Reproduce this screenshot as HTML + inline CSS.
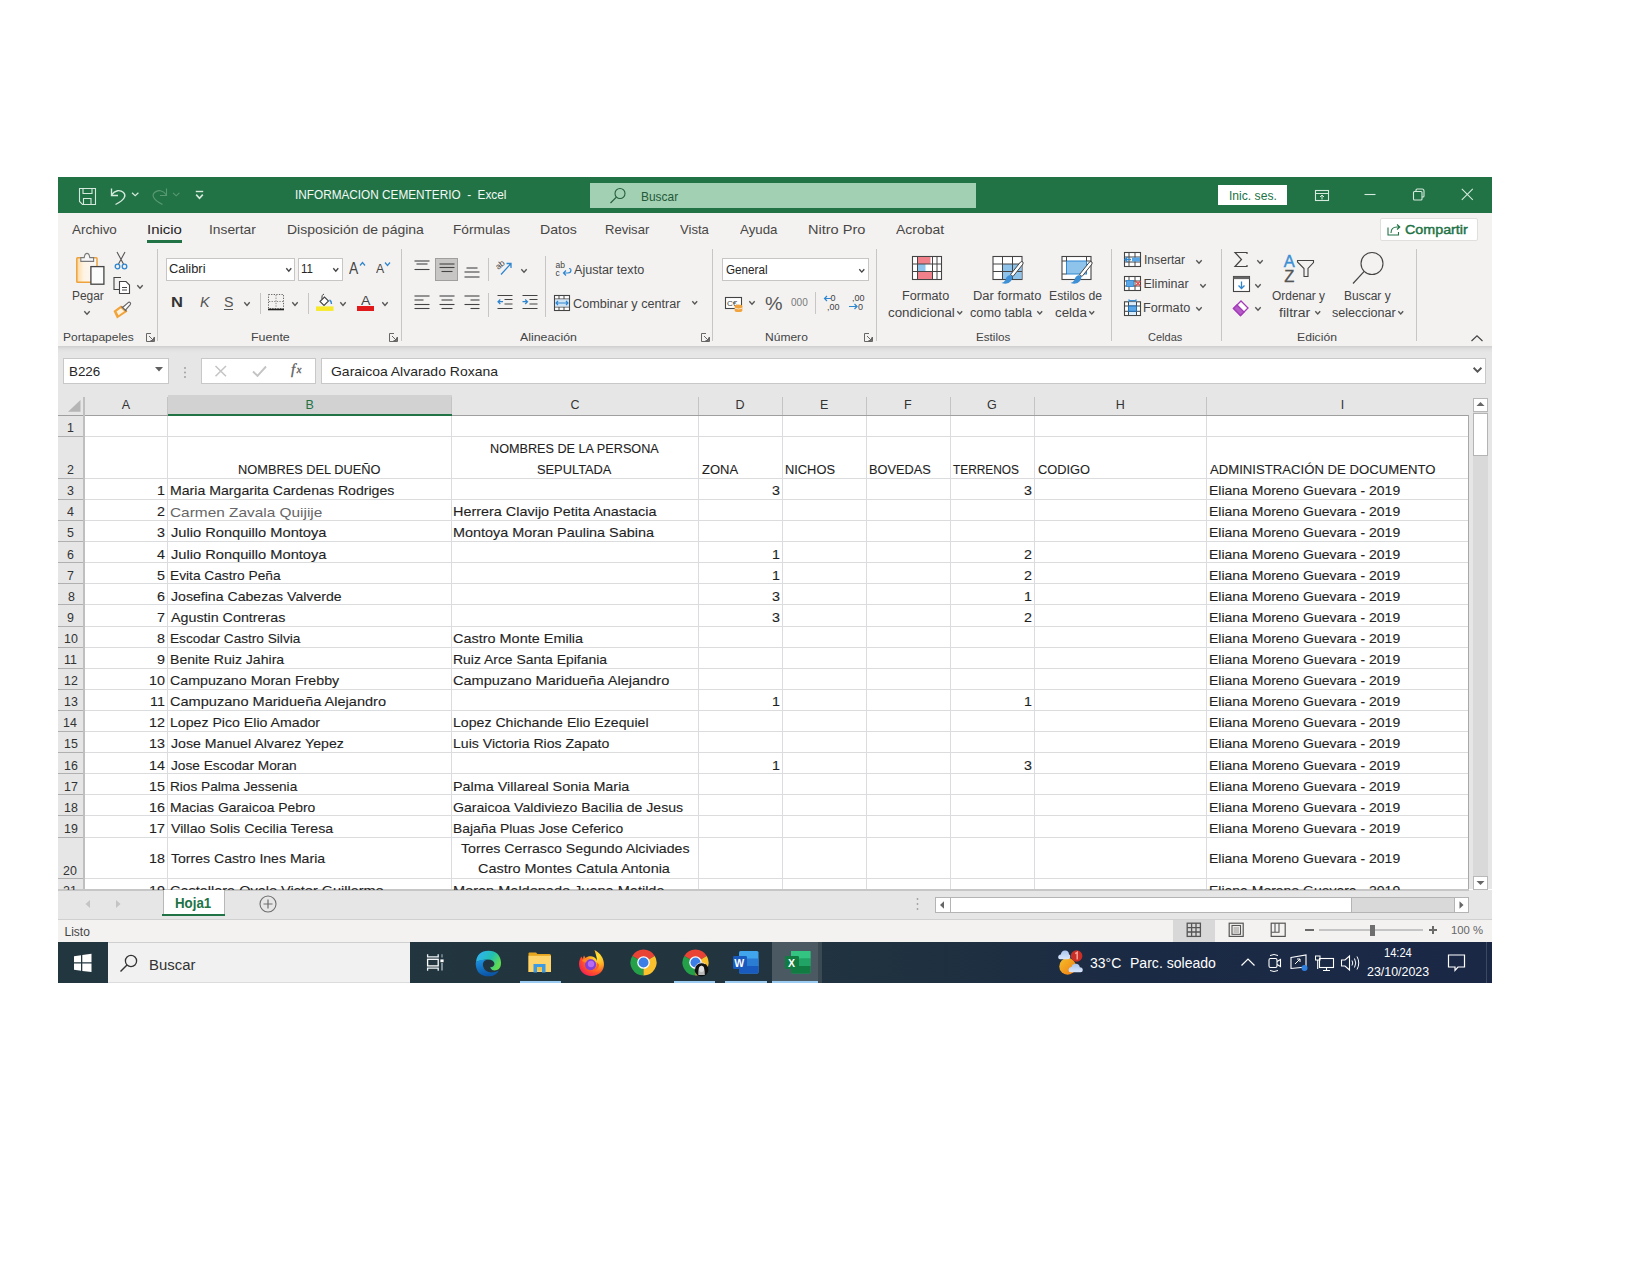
<!DOCTYPE html>
<html><head><meta charset="utf-8"><title>Excel</title>
<style>
html,body{margin:0;padding:0;background:#ffffff;}
body{width:1650px;height:1275px;position:relative;overflow:hidden;font-family:"Liberation Sans",sans-serif;}
svg{overflow:visible}
</style></head><body>
<div style="position:absolute;left:58px;top:177px;width:1434px;height:36px;background:#217346;"></div>
<div style="position:absolute;left:58px;top:213px;width:1434px;height:133px;background:#f3f2f1;"></div>
<div style="position:absolute;left:58px;top:346px;width:1434px;height:49px;background:linear-gradient(#cfcfcf 0px,#dadada 2px,#e2e2e2 4px,#e6e6e6 7px,#e6e6e6 100%);"></div>
<svg style="position:absolute;left:78px;top:187px;" width="20" height="20" viewBox="0 0 20 20"><path d="M1.5 1.5 H17.5 V17.5 H4.5 L1.5 14.5 Z" fill="none" stroke="#d5eadc" stroke-width="1.1"/>
<path d="M5 1.5 V6.5 H14 V1.5" fill="none" stroke="#d5eadc" stroke-width="1.1"/>
<path d="M5.5 17.5 V11.5 H13 V17.5" fill="none" stroke="#d5eadc" stroke-width="1.1"/></svg>
<svg style="position:absolute;left:109px;top:187px;" width="20" height="20" viewBox="0 0 20 20"><path d="M2.5 1.5 V8.5 H9" fill="none" stroke="#d5eadc" stroke-width="1.35"/>
<path d="M2.5 8 C6 3 11 2.5 14.5 5.5 C17.5 8.5 16 12.5 6.5 17.5" fill="none" stroke="#d5eadc" stroke-width="1.35"/></svg>
<svg style="position:absolute;left:131px;top:191px;" width="9" height="7" viewBox="0 0 9 7"><path d="M1 1.8 L4.2 4.8 L7.4 1.8" fill="none" stroke="#d5eadc" stroke-width="1.2"/></svg>
<svg style="position:absolute;left:151px;top:187px;" width="20" height="20" viewBox="0 0 20 20"><path d="M15.5 1.5 V8.5 H9" fill="none" stroke="#5a9a72" stroke-width="1.1"/>
<path d="M15.5 8 C12 3 7 2.5 3.5 5.5 C0.5 8.5 2 12.5 11.5 17.5" fill="none" stroke="#5a9a72" stroke-width="1.1"/></svg>
<svg style="position:absolute;left:172px;top:191px;" width="9" height="7" viewBox="0 0 9 7"><path d="M1 1.8 L4.2 4.8 L7.4 1.8" fill="none" stroke="#5a9a72" stroke-width="1.1"/></svg>
<svg style="position:absolute;left:194px;top:189px;" width="11" height="12" viewBox="0 0 11 12"><path d="M1.8 2.5 H9.2" stroke="#d5eadc" stroke-width="1.4"/>
<path d="M2.2 5.6 L5.5 9.2 L8.8 5.6" fill="none" stroke="#d5eadc" stroke-width="1.6"/></svg>
<div style="position:absolute;left:589.5px;top:183px;width:386.5px;height:25px;background:#a2d0b3;"></div>
<svg style="position:absolute;left:609px;top:187px;" width="18" height="18" viewBox="0 0 18 18"><circle cx="11" cy="6.5" r="5" fill="none" stroke="#245e3b" stroke-width="1.1"/>
<path d="M7.4 10.1 L1.5 16" stroke="#245e3b" stroke-width="1.2"/></svg>
<div style="position:absolute;left:1218px;top:185px;width:69px;height:20px;background:#ffffff;"></div>
<svg style="position:absolute;left:1313px;top:188px;" width="18" height="14" viewBox="0 0 18 14"><rect x="2.5" y="2.5" width="13" height="10" fill="none" stroke="#d5eadc" stroke-width="1.1"/>
<path d="M2.5 5.5 H15.5" stroke="#d5eadc" stroke-width="1"/><path d="M9 11.5 V7 M7 9 L9 7 L11 9" fill="none" stroke="#d5eadc" stroke-width="1"/></svg>
<svg style="position:absolute;left:1363px;top:190px;" width="14" height="8" viewBox="0 0 14 8"><path d="M1.5 4.5 H12.5" stroke="#d5eadc" stroke-width="1.1"/></svg>
<svg style="position:absolute;left:1411px;top:187px;" width="15" height="15" viewBox="0 0 15 15"><rect x="2.5" y="4.5" width="8.5" height="8.5" rx="1" fill="none" stroke="#d5eadc" stroke-width="1.1"/>
<path d="M5 4.5 V3 Q5 2 6 2 H11 Q13 2 13 4 V9 Q13 10 12 10 H11" fill="none" stroke="#d5eadc" stroke-width="1.1"/></svg>
<svg style="position:absolute;left:1460px;top:187px;" width="15" height="15" viewBox="0 0 15 15"><path d="M1.8 1.8 L12.8 12.8 M12.8 1.8 L1.8 12.8" stroke="#d5eadc" stroke-width="1.1"/></svg>
<div style="position:absolute;left:147.4px;top:240px;width:34.599999999999994px;height:2.5999999999999943px;background:#217346;"></div>
<div style="position:absolute;left:1379.5px;top:217.5px;width:98.5px;height:23.80000000000001px;background:#ffffff;box-sizing:border-box;border:1px solid #e1dfdd;border-radius:2px;"></div>
<svg style="position:absolute;left:1386px;top:222px;" width="15" height="15" viewBox="0 0 15 15"><path d="M2 5.5 V13 H12.5 V10" fill="none" stroke="#217346" stroke-width="1.1"/>
<path d="M5 11 C5 7 7.5 5 11 5 H13.5 M11 2.5 L13.8 5 L11 7.5" fill="none" stroke="#217346" stroke-width="1.1"/></svg>
<div style="position:absolute;left:62.6px;top:357.6px;width:106.6px;height:26.599999999999966px;background:#ffffff;box-sizing:border-box;border:1px solid #c8c8c8;"></div>
<svg style="position:absolute;left:154px;top:366px;" width="10" height="7" viewBox="0 0 10 7"><path d="M1 1 H9 L5 5.5 Z" fill="#5f5f5f"/></svg>
<svg style="position:absolute;left:183px;top:366px;" width="4" height="14" viewBox="0 0 4 14"><circle cx="2" cy="2" r="0.9" fill="#9a9a9a"/><circle cx="2" cy="6.5" r="0.9" fill="#9a9a9a"/><circle cx="2" cy="11" r="0.9" fill="#9a9a9a"/></svg>
<div style="position:absolute;left:201.4px;top:357.6px;width:114.9px;height:26.599999999999966px;background:#ffffff;box-sizing:border-box;border:1px solid #c8c8c8;"></div>
<svg style="position:absolute;left:213px;top:364px;" width="15" height="14" viewBox="0 0 15 14"><path d="M2.5 2 L13 12.2 M13 2 L2.5 12.2" stroke="#c4c4c4" stroke-width="1.5"/></svg>
<svg style="position:absolute;left:251px;top:364px;" width="17" height="14" viewBox="0 0 17 14"><path d="M2 7.5 L6.5 11.8 L15 2.5" fill="none" stroke="#c4c4c4" stroke-width="1.9"/></svg>
<svg style="position:absolute;left:290px;top:361px;" width="16" height="16" viewBox="0 0 16 16"><text x="1" y="12.5" font-family="Liberation Serif" font-style="italic" font-size="15" fill="#606060" stroke="#606060" stroke-width="0.3">f</text><text x="6.8" y="12" font-family="Liberation Serif" font-style="italic" font-size="10.5" fill="#606060" stroke="#606060" stroke-width="0.3">x</text></svg>
<div style="position:absolute;left:320.5px;top:357.6px;width:1165.5px;height:26.599999999999966px;background:#ffffff;box-sizing:border-box;border:1px solid #c8c8c8;"></div>
<svg style="position:absolute;left:1471.5px;top:366px;" width="11" height="8" viewBox="0 0 11 8"><path d="M1.6 1.8 L5.5 5.6 L9.4 1.8" fill="none" stroke="#555" stroke-width="1.9"/></svg>
<div style="position:absolute;left:58px;top:890px;width:1434px;height:29px;background:#e6e6e6;"></div>
<div style="position:absolute;left:58px;top:889px;width:1411px;height:1.5px;background:#c6c6c6;"></div>
<svg style="position:absolute;left:84px;top:899px;" width="8" height="10" viewBox="0 0 8 10"><path d="M6 1 L1.5 5 L6 9 Z" fill="#c4c4c4"/></svg>
<svg style="position:absolute;left:114px;top:899px;" width="8" height="10" viewBox="0 0 8 10"><path d="M2 1 L6.5 5 L2 9 Z" fill="#c4c4c4"/></svg>
<div style="position:absolute;left:162.5px;top:889.5px;width:62.0px;height:26.100000000000023px;background:#ffffff;box-sizing:border-box;border-left:1px solid #b8b8b8;border-right:1px solid #b8b8b8;"></div>
<div style="position:absolute;left:162px;top:913.5px;width:63px;height:2.1000000000000227px;background:#217346;"></div>
<svg style="position:absolute;left:258px;top:894px;" width="20" height="20" viewBox="0 0 20 20"><circle cx="10" cy="10" r="8" fill="none" stroke="#6e6e6e" stroke-width="1.1"/><path d="M10 5.5 V14.5 M5.5 10 H14.5" stroke="#6e6e6e" stroke-width="1.2"/></svg>
<svg style="position:absolute;left:915px;top:897px;" width="5" height="14" viewBox="0 0 5 14"><circle cx="2.5" cy="2" r="0.9" fill="#a0a0a0"/><circle cx="2.5" cy="7" r="0.9" fill="#a0a0a0"/><circle cx="2.5" cy="12" r="0.9" fill="#a0a0a0"/></svg>
<div style="position:absolute;left:934.5px;top:897px;width:534.5px;height:15.5px;background:#ffffff;box-sizing:border-box;border:1px solid #b4b4b4;"></div>
<div style="position:absolute;left:950px;top:898px;width:518px;height:13.5px;background:#d9d9d9;"></div>
<div style="position:absolute;left:950px;top:898px;width:402.20000000000005px;height:13.5px;background:#ffffff;box-sizing:border-box;border-right:1px solid #b4b4b4;border-left:1px solid #b4b4b4;"></div>
<div style="position:absolute;left:1453.9px;top:897px;width:15.099999999999909px;height:15.5px;background:#ffffff;box-sizing:border-box;border:1px solid #b4b4b4;"></div>
<svg style="position:absolute;left:937px;top:899.5px;" width="10" height="10" viewBox="0 0 10 10"><path d="M7 1.3 L3 5 L7 8.7 Z" fill="#666"/></svg>
<svg style="position:absolute;left:1456px;top:899.5px;" width="10" height="10" viewBox="0 0 10 10"><path d="M3.5 1.3 L7.5 5 L3.5 8.7 Z" fill="#666"/></svg>
<div style="position:absolute;left:58px;top:919px;width:1434px;height:23px;background:#f3f2f1;"></div>
<div style="position:absolute;left:58px;top:918.5px;width:1434px;height:1.0px;background:#d0d0d0;"></div>
<div style="position:absolute;left:1173px;top:919.5px;width:42px;height:22.5px;background:#d8d8d8;"></div>
<svg style="position:absolute;left:1186px;top:922px;" width="16" height="16" viewBox="0 0 16 16"><rect x="1.2" y="1.2" width="13.2" height="13.2" fill="none" stroke="#555" stroke-width="1.3"/>
<path d="M5.6 1.2 V14.4 M10 1.2 V14.4 M1.2 5.6 H14.4 M1.2 10 H14.4" stroke="#555" stroke-width="1.3"/></svg>
<svg style="position:absolute;left:1228px;top:922px;" width="17" height="16" viewBox="0 0 17 16"><rect x="1.2" y="1.2" width="14" height="13.2" fill="none" stroke="#555" stroke-width="1.2"/>
<rect x="4" y="3.5" width="8.5" height="8.8" fill="none" stroke="#555" stroke-width="1.1"/>
<path d="M5.5 6 H11 M5.5 8 H11 M5.5 10 H11" stroke="#777" stroke-width="0.8"/></svg>
<svg style="position:absolute;left:1270px;top:922px;" width="17" height="16" viewBox="0 0 17 16"><rect x="1.2" y="1.2" width="14" height="13.2" fill="none" stroke="#555" stroke-width="1.2"/>
<path d="M1.2 10.2 H9 V1.2 M5 1.2 V10" fill="none" stroke="#555" stroke-width="1.1"/></svg>
<div style="position:absolute;left:1305px;top:929.2px;width:8.5px;height:1.6999999999999318px;background:#6a6a6a;"></div>
<div style="position:absolute;left:1319.3px;top:929.3px;width:104.10000000000014px;height:1.7000000000000455px;background:#c4c4c4;"></div>
<div style="position:absolute;left:1369.7px;top:925px;width:5.2999999999999545px;height:11.399999999999977px;background:#6e6e6e;"></div>
<div style="position:absolute;left:1429.2px;top:929.2px;width:7.7999999999999545px;height:1.6999999999999318px;background:#6a6a6a;"></div>
<div style="position:absolute;left:1432.3px;top:926px;width:1.7000000000000455px;height:8.299999999999955px;background:#6a6a6a;"></div>
<div style="position:absolute;left:156.9px;top:249.4px;width:1.0px;height:92.1px;background:#c8c6c4;"></div>
<div style="position:absolute;left:400.5px;top:249.4px;width:1.0px;height:92.1px;background:#c8c6c4;"></div>
<div style="position:absolute;left:712.1px;top:249.4px;width:1.0px;height:92.1px;background:#c8c6c4;"></div>
<div style="position:absolute;left:876.0px;top:249.4px;width:1.0px;height:92.1px;background:#c8c6c4;"></div>
<div style="position:absolute;left:1110.9px;top:249.4px;width:1.0px;height:92.1px;background:#c8c6c4;"></div>
<div style="position:absolute;left:1220.5px;top:249.4px;width:1.0px;height:92.1px;background:#c8c6c4;"></div>
<div style="position:absolute;left:1415.9px;top:249.4px;width:1.0px;height:92.1px;background:#c8c6c4;"></div>
<svg style="position:absolute;left:74px;top:252px;" width="33" height="34" viewBox="0 0 33 34"><defs><linearGradient id="cbg" x1="0" y1="0" x2="1" y2="0"><stop offset="0" stop-color="#fcd9a0"/><stop offset="0.35" stop-color="#fff4e4"/><stop offset="1" stop-color="#f8f8f8"/></linearGradient></defs>
<rect x="2.8" y="5.8" width="20.2" height="24.4" rx="0.8" fill="url(#cbg)" stroke="#eda23c" stroke-width="1.5"/>
<path d="M6.8 9.4 V5.6 H10.2 Q10.8 1.4 13 1.4 Q15.2 1.4 15.8 5.6 H19.6 V9.4 Z" fill="#f7f7f7" stroke="#7a7a7a" stroke-width="1.1"/>
<rect x="16.9" y="14.6" width="13" height="17.6" fill="#fbfbfb" stroke="#444" stroke-width="1.3"/></svg>
<svg style="position:absolute;left:83px;top:309.6px;" width="8" height="5.4" viewBox="0 0 8 5.4"><path d="M1.3 1.3 L4.0 4.2 L6.7 1.3" fill="none" stroke="#555" stroke-width="1.35"/></svg>
<svg style="position:absolute;left:113px;top:251px;" width="16" height="20" viewBox="0 0 16 20"><path d="M4 1 L10.5 13 M12 1 L5.5 13" stroke="#555" stroke-width="1.1"/>
<circle cx="4.5" cy="15.5" r="2.3" fill="none" stroke="#2e86cf" stroke-width="1.3"/><circle cx="11.5" cy="15.5" r="2.3" fill="none" stroke="#2e86cf" stroke-width="1.3"/></svg>
<svg style="position:absolute;left:112px;top:276px;" width="19" height="19" viewBox="0 0 19 19"><path d="M9 1.5 H2 V13.5 H7" fill="none" stroke="#444" stroke-width="1.1"/>
<path d="M7.5 5.5 H14 L17.5 9 V17.5 H7.5 Z" fill="#fff" stroke="#444" stroke-width="1.1"/>
<path d="M10 11.5 H15 M10 14 H15" stroke="#444" stroke-width="1"/></svg>
<svg style="position:absolute;left:136px;top:283.6px;" width="8" height="5.4" viewBox="0 0 8 5.4"><path d="M1.3 1.3 L4.0 4.2 L6.7 1.3" fill="none" stroke="#555" stroke-width="1.35"/></svg>
<svg style="position:absolute;left:112px;top:301px;" width="20" height="19" viewBox="0 0 20 19"><path d="M1.5 10 L9 4.5 L15.5 10.5 L5 17.5 Z" fill="#f2a33a"/>
<path d="M4.5 10.5 L9 7.2 L12.2 10.3 L6.5 14.2 Z" fill="#fff3df"/>
<path d="M10.2 6.8 L16.2 1.6 Q17.3 0.8 18.2 1.7 Q19 2.6 18.2 3.6 L13.2 9.3" fill="#fdfdfd" stroke="#666" stroke-width="1.2"/>
<path d="M9.5 5.5 L14.5 10.2" stroke="#666" stroke-width="1.2"/></svg>
<svg style="position:absolute;left:145.5px;top:333.3px;" width="9" height="9" viewBox="0 0 9 9"><path d="M0.5 0.5 H5 M0.5 0.5 V8.5 H8.5 V4" fill="none" stroke="#666" stroke-width="1"/><path d="M3 3 L7.5 7.5 M7.5 4.5 V7.5 H4.5" fill="none" stroke="#666" stroke-width="1"/></svg>
<div style="position:absolute;left:166.4px;top:257.9px;width:128.9px;height:23.5px;background:#fff;box-sizing:border-box;border:1px solid #c8c6c4;"></div>
<svg style="position:absolute;left:284.8px;top:266.8px;" width="7.6" height="5.4" viewBox="0 0 7.6 5.4"><path d="M1.3 1.3 L3.8 4.2 L6.3 1.3" fill="none" stroke="#444" stroke-width="1.35"/></svg>
<div style="position:absolute;left:297.9px;top:257.9px;width:44.700000000000045px;height:23.5px;background:#fff;box-sizing:border-box;border:1px solid #c8c6c4;"></div>
<svg style="position:absolute;left:331.8px;top:266.8px;" width="7.6" height="5.4" viewBox="0 0 7.6 5.4"><path d="M1.3 1.3 L3.8 4.2 L6.3 1.3" fill="none" stroke="#444" stroke-width="1.35"/></svg>
<svg style="position:absolute;left:358.5px;top:260.5px;" width="8" height="6" viewBox="0 0 8 6"><path d="M1 4.5 L3.5 1.5 L6 4.5" fill="none" stroke="#2e86cf" stroke-width="1.2"/></svg>
<svg style="position:absolute;left:384px;top:260.5px;" width="8" height="6" viewBox="0 0 8 6"><path d="M1 1.5 L3.5 4.5 L6 1.5" fill="none" stroke="#2e86cf" stroke-width="1.2"/></svg>
<div style="position:absolute;left:224px;top:308.5px;width:9px;height:1.1000000000000227px;background:#555;"></div>
<svg style="position:absolute;left:242.5px;top:300.5px;" width="8" height="5.6" viewBox="0 0 8 5.6"><path d="M1.3 1.3 L4.0 4.3999999999999995 L6.7 1.3" fill="none" stroke="#555" stroke-width="1.35"/></svg>
<div style="position:absolute;left:259.8px;top:292.7px;width:1.0px;height:21.30000000000001px;background:#c8c6c4;"></div>
<svg style="position:absolute;left:267px;top:293px;" width="19" height="19" viewBox="0 0 19 19"><rect x="1.5" y="1.5" width="15" height="14" fill="none" stroke="#666" stroke-width="1" stroke-dasharray="1.3 1.3"/>
<path d="M9 2 V15 M2 8.5 H16" stroke="#888" stroke-width="1" stroke-dasharray="1.3 1.3"/>
<path d="M1 16.5 H17" stroke="#222" stroke-width="1.6"/></svg>
<svg style="position:absolute;left:291px;top:300.5px;" width="8" height="5.6" viewBox="0 0 8 5.6"><path d="M1.3 1.3 L4.0 4.3999999999999995 L6.7 1.3" fill="none" stroke="#555" stroke-width="1.35"/></svg>
<div style="position:absolute;left:308.0px;top:292.7px;width:1.0px;height:21.30000000000001px;background:#c8c6c4;"></div>
<svg style="position:absolute;left:316px;top:293px;" width="19" height="19" viewBox="0 0 19 19"><path d="M4 8.5 L8.5 4 L12.5 8 L8 12.5 Z" fill="#fff" stroke="#444" stroke-width="1.1"/>
<path d="M6 6 Q5.5 1.5 8 1.2" fill="none" stroke="#444" stroke-width="1"/>
<path d="M13.5 7 Q15.5 8 15.5 11" fill="none" stroke="#2e86cf" stroke-width="1.4"/>
<rect x="0" y="13.4" width="17.5" height="4.5" fill="#f7e92a"/></svg>
<svg style="position:absolute;left:339.2px;top:300.5px;" width="8" height="5.6" viewBox="0 0 8 5.6"><path d="M1.3 1.3 L4.0 4.3999999999999995 L6.7 1.3" fill="none" stroke="#555" stroke-width="1.35"/></svg>
<div style="position:absolute;left:357px;top:306.4px;width:17.399999999999977px;height:4.5px;background:#e01a1a;"></div>
<svg style="position:absolute;left:380.8px;top:300.5px;" width="8" height="5.6" viewBox="0 0 8 5.6"><path d="M1.3 1.3 L4.0 4.3999999999999995 L6.7 1.3" fill="none" stroke="#555" stroke-width="1.35"/></svg>
<svg style="position:absolute;left:388.8px;top:333px;" width="9" height="9" viewBox="0 0 9 9"><path d="M0.5 0.5 H5 M0.5 0.5 V8.5 H8.5 V4" fill="none" stroke="#666" stroke-width="1"/><path d="M3 3 L7.5 7.5 M7.5 4.5 V7.5 H4.5" fill="none" stroke="#666" stroke-width="1"/></svg>
<div style="position:absolute;left:435.3px;top:257.6px;width:22.5px;height:23.899999999999977px;background:#c8c6c4;box-sizing:border-box;border:1px solid #a19f9d;"></div>
<svg style="position:absolute;left:413.5px;top:260px;" width="18" height="18" viewBox="0 0 18 18"><path d="M0.5 1.0 H15.5" stroke="#444" stroke-width="1.1"/><path d="M2.5 4.0 H13.5" stroke="#444" stroke-width="1.1"/><path d="M0.5 9.5 H15.5" stroke="#444" stroke-width="1.1"/></svg>
<svg style="position:absolute;left:438.5px;top:263px;" width="18" height="18" viewBox="0 0 18 18"><path d="M0.5 1.0 H15.5" stroke="#444" stroke-width="1.1"/><path d="M0.5 4.5 H15.5" stroke="#444" stroke-width="1.1"/><path d="M2.5 8.5 H13.5" stroke="#444" stroke-width="1.1"/></svg>
<svg style="position:absolute;left:464px;top:266.5px;" width="18" height="18" viewBox="0 0 18 18"><path d="M2.5 1.0 H13.5" stroke="#444" stroke-width="1.1"/><path d="M0.5 5.0 H15.5" stroke="#444" stroke-width="1.1"/><path d="M0.5 10.0 H15.5" stroke="#444" stroke-width="1.1"/></svg>
<div style="position:absolute;left:487.5px;top:258px;width:1.0px;height:22.5px;background:#c8c6c4;"></div>
<svg style="position:absolute;left:495px;top:259px;" width="20" height="18" viewBox="0 0 20 18"><text x="1" y="9" font-family="Liberation Sans" font-size="8.5" fill="#444" transform="rotate(-40 5 7)">ab</text>
<path d="M6 15.5 L16 4.5 M11.5 4.5 H16 V9" fill="none" stroke="#2e86cf" stroke-width="1.3"/></svg>
<svg style="position:absolute;left:519.6px;top:267.5px;" width="8" height="5.4" viewBox="0 0 8 5.4"><path d="M1.3 1.3 L4.0 4.2 L6.7 1.3" fill="none" stroke="#555" stroke-width="1.35"/></svg>
<svg style="position:absolute;left:413.5px;top:295px;" width="18" height="18" viewBox="0 0 18 18"><path d="M0.5 1.0 H15.5" stroke="#444" stroke-width="1.1"/><path d="M0.5 5.0 H9.5" stroke="#444" stroke-width="1.1"/><path d="M0.5 9.5 H15.5" stroke="#444" stroke-width="1.1"/><path d="M0.5 13.5 H15.5" stroke="#444" stroke-width="1.1"/></svg>
<svg style="position:absolute;left:438.5px;top:295px;" width="18" height="18" viewBox="0 0 18 18"><path d="M0.5 1.0 H15.5" stroke="#444" stroke-width="1.1"/><path d="M2.5 5.0 H13.5" stroke="#444" stroke-width="1.1"/><path d="M0.5 9.5 H15.5" stroke="#444" stroke-width="1.1"/><path d="M2.5 13.5 H13.5" stroke="#444" stroke-width="1.1"/></svg>
<svg style="position:absolute;left:464px;top:295px;" width="18" height="18" viewBox="0 0 18 18"><path d="M0.5 1.0 H15.5" stroke="#444" stroke-width="1.1"/><path d="M6.5 5.0 H15.5" stroke="#444" stroke-width="1.1"/><path d="M0.5 9.5 H15.5" stroke="#444" stroke-width="1.1"/><path d="M6.5 13.5 H15.5" stroke="#444" stroke-width="1.1"/></svg>
<div style="position:absolute;left:487.5px;top:292.5px;width:1.0px;height:24.0px;background:#c8c6c4;"></div>
<svg style="position:absolute;left:496.5px;top:295px;" width="18" height="18" viewBox="0 0 18 18"><path d="M0.5 0.5 H15.5 M7.5 4.5 H15.5 M7.5 9 H15.5 M0.5 13.5 H15.5" stroke="#444" stroke-width="1.1"/>
<path d="M6 6.7 H1 M3.3 4.5 L1 6.7 L3.3 9" fill="none" stroke="#2e86cf" stroke-width="1.2"/></svg>
<svg style="position:absolute;left:521.5px;top:295px;" width="18" height="18" viewBox="0 0 18 18"><path d="M0.5 0.5 H15.5 M7.5 4.5 H15.5 M7.5 9 H15.5 M0.5 13.5 H15.5" stroke="#444" stroke-width="1.1"/>
<path d="M0.5 6.7 H5.5 M3.2 4.5 L5.5 6.7 L3.2 9" fill="none" stroke="#2e86cf" stroke-width="1.2"/></svg>
<div style="position:absolute;left:545.3px;top:255.7px;width:1.0px;height:61.10000000000002px;background:#c8c6c4;"></div>
<svg style="position:absolute;left:555px;top:261px;" width="18" height="17" viewBox="0 0 18 17"><text x="0.5" y="7" font-family="Liberation Sans" font-size="8.5" fill="#444">ab</text>
<text x="0.5" y="14.5" font-family="Liberation Sans" font-size="8.5" fill="#444">c</text>
<path d="M9 12 H13 Q16 12 16 9 Q16 7.5 14 7.5 M11 9.5 L8.5 12 L11 14.5" fill="none" stroke="#2e86cf" stroke-width="1.2"/></svg>
<svg style="position:absolute;left:553px;top:293.5px;" width="18" height="18" viewBox="0 0 18 18"><rect x="1.5" y="1.5" width="15" height="15" fill="#fff" stroke="#444" stroke-width="1.1"/>
<path d="M1.5 5 H16.5 M1.5 13 H16.5 M6 1.5 V5 M11 1.5 V5 M6 13 V16.5 M11 13 V16.5" stroke="#444" stroke-width="1"/>
<rect x="2" y="5.5" width="14" height="7" fill="#cfe4f7"/>
<path d="M3 9 H15 M5 7 L3 9 L5 11 M13 7 L15 9 L13 11" fill="none" stroke="#2e86cf" stroke-width="1.1"/></svg>
<svg style="position:absolute;left:691px;top:300.2px;" width="7.5" height="5.2" viewBox="0 0 7.5 5.2"><path d="M1.3 1.3 L3.75 4.0 L6.2 1.3" fill="none" stroke="#555" stroke-width="1.35"/></svg>
<svg style="position:absolute;left:700.6px;top:333px;" width="9" height="9" viewBox="0 0 9 9"><path d="M0.5 0.5 H5 M0.5 0.5 V8.5 H8.5 V4" fill="none" stroke="#666" stroke-width="1"/><path d="M3 3 L7.5 7.5 M7.5 4.5 V7.5 H4.5" fill="none" stroke="#666" stroke-width="1"/></svg>
<div style="position:absolute;left:722px;top:257.7px;width:146.60000000000002px;height:23.69999999999999px;background:#fff;box-sizing:border-box;border:1px solid #c8c6c4;"></div>
<svg style="position:absolute;left:858px;top:267.6px;" width="7.6" height="5.3" viewBox="0 0 7.6 5.3"><path d="M1.3 1.3 L3.8 4.1 L6.3 1.3" fill="none" stroke="#444" stroke-width="1.35"/></svg>
<svg style="position:absolute;left:724px;top:296px;" width="21" height="17" viewBox="0 0 21 17"><rect x="1.5" y="1.5" width="16" height="11" fill="#fff" stroke="#444" stroke-width="1.1"/>
<text x="3" y="10" font-family="Liberation Sans" font-size="8" fill="#444">C€</text>
<ellipse cx="14.5" cy="10" rx="3.8" ry="1.6" fill="#f0a33c"/><rect x="10.7" y="10" width="7.6" height="4.5" fill="#f0a33c"/>
<ellipse cx="14.5" cy="14.5" rx="3.8" ry="1.6" fill="#f0a33c"/><path d="M10.7 12.2 Q14.5 13.8 18.3 12.2" stroke="#fff" stroke-width="0.7" fill="none"/></svg>
<svg style="position:absolute;left:748px;top:300.4px;" width="8" height="5.4" viewBox="0 0 8 5.4"><path d="M1.3 1.3 L4.0 4.2 L6.7 1.3" fill="none" stroke="#555" stroke-width="1.35"/></svg>
<div style="position:absolute;left:814.8px;top:292px;width:1.0px;height:21.5px;background:#c8c6c4;"></div>
<svg style="position:absolute;left:822px;top:293px;" width="19" height="19" viewBox="0 0 19 19"><text x="8.5" y="8" font-family="Liberation Sans" font-size="9" fill="#444">0</text>
<text x="5" y="17" font-family="Liberation Sans" font-size="9" fill="#444">,00</text>
<path d="M9 5.5 H2.5 M5 3 L2.5 5.5 L5 8" fill="none" stroke="#2e86cf" stroke-width="1.2"/></svg>
<svg style="position:absolute;left:847px;top:293px;" width="20" height="19" viewBox="0 0 20 19"><text x="5" y="8" font-family="Liberation Sans" font-size="9" fill="#444">,00</text>
<text x="11" y="17" font-family="Liberation Sans" font-size="9" fill="#444">0</text>
<path d="M2 13.5 H10 M7.5 11 L10 13.5 L7.5 16" fill="none" stroke="#2e86cf" stroke-width="1.2"/></svg>
<svg style="position:absolute;left:864.4px;top:333px;" width="9" height="9" viewBox="0 0 9 9"><path d="M0.5 0.5 H5 M0.5 0.5 V8.5 H8.5 V4" fill="none" stroke="#666" stroke-width="1"/><path d="M3 3 L7.5 7.5 M7.5 4.5 V7.5 H4.5" fill="none" stroke="#666" stroke-width="1"/></svg>
<svg style="position:absolute;left:911px;top:255px;" width="32" height="26" viewBox="0 0 32 26"><rect x="1.5" y="1.5" width="29" height="23" fill="#fff" stroke="#444" stroke-width="1.1"/>
<rect x="6.5" y="2" width="13" height="7" fill="#f0808a"/><rect x="6.5" y="16" width="15" height="8" fill="#f0808a"/>
<rect x="6.5" y="9" width="8" height="7" fill="#8ec3ec"/>
<path d="M1.5 9 H30.5 M1.5 16.5 H30.5 M6.5 1.5 V24.5 M21.5 1.5 V24.5 M26 1.5 V24.5" stroke="#444" stroke-width="1"/></svg>
<svg style="position:absolute;left:955.5px;top:310px;" width="7.5" height="5.2" viewBox="0 0 7.5 5.2"><path d="M1.3 1.3 L3.75 4.0 L6.2 1.3" fill="none" stroke="#555" stroke-width="1.35"/></svg>
<svg style="position:absolute;left:991px;top:255px;" width="36" height="32" viewBox="0 0 36 32"><rect x="2" y="1.5" width="29" height="23" fill="#fff" stroke="#444" stroke-width="1.1"/>
<rect x="11.5" y="9" width="19" height="15" fill="#8ec3ec"/>
<path d="M2 9 H31 M2 16.5 H31 M11.5 1.5 V24.5 M21.5 1.5 V24.5" stroke="#444" stroke-width="1"/>
<path d="M32 9 L22 21.5 L19.5 19.5 L29.5 7 Q31 6 32 7 Z" fill="#fff" stroke="#444" stroke-width="1"/>
<path d="M19 20 Q15 21 14.5 25 Q13 27.5 10.5 28 Q17 30 20 26 Q21.5 23.5 21.5 21.5 Z" fill="#3d8fd6"/></svg>
<svg style="position:absolute;left:1035.5px;top:310px;" width="7.5" height="5.2" viewBox="0 0 7.5 5.2"><path d="M1.3 1.3 L3.75 4.0 L6.2 1.3" fill="none" stroke="#555" stroke-width="1.35"/></svg>
<svg style="position:absolute;left:1060px;top:255px;" width="36" height="32" viewBox="0 0 36 32"><rect x="2" y="1.5" width="29" height="23" fill="#fff" stroke="#444" stroke-width="1.1"/>
<rect x="6.5" y="6" width="20" height="13" fill="#8ec3ec" stroke="#2e86cf" stroke-width="1"/>
<path d="M2 6 H6.5 M26.5 6 H31 M2 19 H6.5 M6.5 1.5 V6 M26.5 1.5 V6" stroke="#444" stroke-width="1"/>
<path d="M32 9 L22 21.5 L19.5 19.5 L29.5 7 Q31 6 32 7 Z" fill="#fff" stroke="#444" stroke-width="1"/>
<path d="M19 20 Q15 21 14.5 25 Q13 27.5 10.5 28 Q17 30 20 26 Q21.5 23.5 21.5 21.5 Z" fill="#3d8fd6"/></svg>
<svg style="position:absolute;left:1087.5px;top:310px;" width="7.5" height="5.2" viewBox="0 0 7.5 5.2"><path d="M1.3 1.3 L3.75 4.0 L6.2 1.3" fill="none" stroke="#555" stroke-width="1.35"/></svg>
<svg style="position:absolute;left:1123px;top:251px;" width="20" height="18" viewBox="0 0 20 18"><rect x="1.5" y="1.5" width="16" height="14" fill="#fff" stroke="#444" stroke-width="1.1"/>
<path d="M1.5 6 H17.5 M1.5 11 H17.5 M6 1.5 V15.5 M12 1.5 V15.5" stroke="#444" stroke-width="1"/>
<rect x="9" y="6.5" width="8" height="4" fill="#5aa5e6"/>
<path d="M8 8.5 H2 M4.5 6 L2 8.5 L4.5 11" fill="none" stroke="#2e86cf" stroke-width="1.3"/></svg>
<svg style="position:absolute;left:1195px;top:258.5px;" width="8" height="5.5" viewBox="0 0 8 5.5"><path d="M1.3 1.3 L4.0 4.3 L6.7 1.3" fill="none" stroke="#555" stroke-width="1.35"/></svg>
<svg style="position:absolute;left:1123px;top:275px;" width="20" height="18" viewBox="0 0 20 18"><rect x="1.5" y="1.5" width="16" height="14" fill="#fff" stroke="#444" stroke-width="1.1"/>
<path d="M1.5 6 H17.5 M1.5 11 H17.5 M6 1.5 V15.5 M12 1.5 V15.5" stroke="#444" stroke-width="1"/>
<rect x="3.5" y="5.5" width="7" height="6" fill="#5aa5e6" stroke="#2e86cf" stroke-width="0.8"/>
<path d="M12.5 6 L17.5 11 M17.5 6 L12.5 11" stroke="#e04848" stroke-width="1.2"/></svg>
<svg style="position:absolute;left:1198.7px;top:282.5px;" width="8" height="5.5" viewBox="0 0 8 5.5"><path d="M1.3 1.3 L4.0 4.3 L6.7 1.3" fill="none" stroke="#555" stroke-width="1.35"/></svg>
<svg style="position:absolute;left:1123px;top:298px;" width="20" height="20" viewBox="0 0 20 20"><rect x="1.5" y="3.8" width="16" height="13.7" fill="#fff" stroke="#444" stroke-width="1.1"/>
<rect x="5.5" y="4.3" width="8" height="12.7" fill="#d9ecfb"/>
<path d="M1.5 8 H17.5 M1.5 13.3 H17.5 M5.5 3.8 V17.5 M13.5 3.8 V17.5" stroke="#444" stroke-width="1"/>
<rect x="5.5" y="8" width="8" height="5.3" fill="#5aa5e6" stroke="#1f6fb8" stroke-width="1"/>
<path d="M6 2.6 H13 M6 1.2 V4 M13 1.2 V4" stroke="#3b8fd4" stroke-width="1.1"/></svg>
<svg style="position:absolute;left:1194.5px;top:306.4px;" width="8" height="5.5" viewBox="0 0 8 5.5"><path d="M1.3 1.3 L4.0 4.3 L6.7 1.3" fill="none" stroke="#555" stroke-width="1.35"/></svg>
<svg style="position:absolute;left:1233px;top:251px;" width="17" height="18" viewBox="0 0 17 18"><path d="M14 3 V1.5 H2 L8.5 8.5 L2 15.5 H14 V14" fill="none" stroke="#444" stroke-width="1.2"/></svg>
<svg style="position:absolute;left:1256px;top:258.5px;" width="8" height="5.5" viewBox="0 0 8 5.5"><path d="M1.3 1.3 L4.0 4.3 L6.7 1.3" fill="none" stroke="#555" stroke-width="1.35"/></svg>
<svg style="position:absolute;left:1232px;top:275px;" width="20" height="18" viewBox="0 0 20 18"><rect x="1.5" y="1.5" width="16" height="15" fill="#fff" stroke="#444" stroke-width="1.1"/>
<rect x="1.5" y="1.5" width="16" height="2.6" fill="#666"/>
<path d="M9.5 6.5 V13.5 M6.5 10.5 L9.5 13.5 L12.5 10.5" fill="none" stroke="#2e86cf" stroke-width="1.3"/></svg>
<svg style="position:absolute;left:1254px;top:282.5px;" width="8" height="5.5" viewBox="0 0 8 5.5"><path d="M1.3 1.3 L4.0 4.3 L6.7 1.3" fill="none" stroke="#555" stroke-width="1.35"/></svg>
<svg style="position:absolute;left:1232px;top:299px;" width="18" height="18" viewBox="0 0 18 18"><path d="M1.5 9.5 L9 2 L16 9 L8.5 16.5 Z" fill="#fff" stroke="#a339b9" stroke-width="1.3"/>
<path d="M1.5 9.5 L5 6 L12 13 L8.5 16.5 Z" fill="#b55ac7" stroke="#a339b9" stroke-width="1.3"/></svg>
<svg style="position:absolute;left:1254px;top:306.4px;" width="8" height="5.5" viewBox="0 0 8 5.5"><path d="M1.3 1.3 L4.0 4.3 L6.7 1.3" fill="none" stroke="#555" stroke-width="1.35"/></svg>
<svg style="position:absolute;left:1282px;top:253px;" width="36" height="32" viewBox="0 0 36 32"><text x="1.8" y="13.5" font-family="Liberation Sans" font-size="16.5" fill="#3b8fd4" stroke="#3b8fd4" stroke-width="0.4">A</text>
<text x="2.3" y="28.6" font-family="Liberation Sans" font-size="16.5" fill="#555" stroke="#555" stroke-width="0.3">Z</text>
<path d="M15.5 7.5 H31.5 V9.5 L26 15.5 V23.5 H22 V15.5 L15.5 9 Z" fill="none" stroke="#444" stroke-width="1.1"/></svg>
<svg style="position:absolute;left:1313.5px;top:310px;" width="7.5" height="5.2" viewBox="0 0 7.5 5.2"><path d="M1.3 1.3 L3.75 4.0 L6.2 1.3" fill="none" stroke="#555" stroke-width="1.35"/></svg>
<svg style="position:absolute;left:1351px;top:251px;" width="35" height="35" viewBox="0 0 35 35"><circle cx="21" cy="12.5" r="11" fill="none" stroke="#444" stroke-width="1.1"/>
<path d="M13.2 20.3 L2 32.5" stroke="#444" stroke-width="1.2"/></svg>
<svg style="position:absolute;left:1396.5px;top:310px;" width="7.5" height="5.2" viewBox="0 0 7.5 5.2"><path d="M1.3 1.3 L3.75 4.0 L6.2 1.3" fill="none" stroke="#555" stroke-width="1.35"/></svg>
<svg style="position:absolute;left:1470px;top:334px;" width="14" height="9" viewBox="0 0 14 9"><path d="M1.5 7 L7 1.8 L12.5 7" fill="none" stroke="#444" stroke-width="1.2"/></svg>
<div style="position:absolute;left:58px;top:395.2px;width:1434px;height:494.3px;background:#e6e6e6;"></div>
<div style="position:absolute;left:84.5px;top:415.3px;width:1384.1px;height:474.2px;background:#ffffff;"></div>
<div style="position:absolute;left:167.7px;top:395.2px;width:283.90000000000003px;height:20.100000000000023px;background:#d2d2d2;"></div>
<svg style="position:absolute;left:66px;top:399px;" width="16" height="14" viewBox="0 0 16 14"><path d="M14.5 1 V12.8 H2 Z" fill="#b5b5b5"/></svg>
<div style="position:absolute;left:84.5px;top:435.9px;width:1384.1px;height:1.0px;background:#dadcdd;"></div>
<div style="position:absolute;left:84.5px;top:477.8px;width:1384.1px;height:1.0px;background:#dadcdd;"></div>
<div style="position:absolute;left:84.5px;top:498.90000000000003px;width:1384.1px;height:1.0px;background:#dadcdd;"></div>
<div style="position:absolute;left:84.5px;top:520.0px;width:1384.1px;height:1.0px;background:#dadcdd;"></div>
<div style="position:absolute;left:84.5px;top:541.1px;width:1384.1px;height:1.0px;background:#dadcdd;"></div>
<div style="position:absolute;left:84.5px;top:562.2px;width:1384.1px;height:1.0px;background:#dadcdd;"></div>
<div style="position:absolute;left:84.5px;top:583.3px;width:1384.1px;height:1.0px;background:#dadcdd;"></div>
<div style="position:absolute;left:84.5px;top:604.4px;width:1384.1px;height:1.0px;background:#dadcdd;"></div>
<div style="position:absolute;left:84.5px;top:625.5px;width:1384.1px;height:1.0px;background:#dadcdd;"></div>
<div style="position:absolute;left:84.5px;top:646.6px;width:1384.1px;height:1.0px;background:#dadcdd;"></div>
<div style="position:absolute;left:84.5px;top:667.7px;width:1384.1px;height:1.0px;background:#dadcdd;"></div>
<div style="position:absolute;left:84.5px;top:688.8px;width:1384.1px;height:1.0px;background:#dadcdd;"></div>
<div style="position:absolute;left:84.5px;top:709.9000000000001px;width:1384.1px;height:1.0px;background:#dadcdd;"></div>
<div style="position:absolute;left:84.5px;top:731.0px;width:1384.1px;height:1.0px;background:#dadcdd;"></div>
<div style="position:absolute;left:84.5px;top:752.1px;width:1384.1px;height:1.0px;background:#dadcdd;"></div>
<div style="position:absolute;left:84.5px;top:773.2px;width:1384.1px;height:1.0px;background:#dadcdd;"></div>
<div style="position:absolute;left:84.5px;top:794.3px;width:1384.1px;height:1.0px;background:#dadcdd;"></div>
<div style="position:absolute;left:84.5px;top:815.4000000000001px;width:1384.1px;height:1.0px;background:#dadcdd;"></div>
<div style="position:absolute;left:84.5px;top:836.5px;width:1384.1px;height:1.0px;background:#dadcdd;"></div>
<div style="position:absolute;left:84.5px;top:878.4px;width:1384.1px;height:1.0px;background:#dadcdd;"></div>
<div style="position:absolute;left:167.2px;top:415.3px;width:1.0px;height:474.2px;background:#dadcdd;"></div>
<div style="position:absolute;left:451.1px;top:415.3px;width:1.0px;height:474.2px;background:#dadcdd;"></div>
<div style="position:absolute;left:697.9px;top:415.3px;width:1.0px;height:474.2px;background:#dadcdd;"></div>
<div style="position:absolute;left:781.8px;top:415.3px;width:1.0px;height:474.2px;background:#dadcdd;"></div>
<div style="position:absolute;left:865.8px;top:415.3px;width:1.0px;height:474.2px;background:#dadcdd;"></div>
<div style="position:absolute;left:949.6px;top:415.3px;width:1.0px;height:474.2px;background:#dadcdd;"></div>
<div style="position:absolute;left:1033.8px;top:415.3px;width:1.0px;height:474.2px;background:#dadcdd;"></div>
<div style="position:absolute;left:1206.0px;top:415.3px;width:1.0px;height:474.2px;background:#dadcdd;"></div>
<div style="position:absolute;left:58px;top:435.9px;width:25.5px;height:1.0px;background:#b0b0b0;"></div>
<div style="position:absolute;left:58px;top:477.8px;width:25.5px;height:1.0px;background:#b0b0b0;"></div>
<div style="position:absolute;left:58px;top:498.90000000000003px;width:25.5px;height:1.0px;background:#b0b0b0;"></div>
<div style="position:absolute;left:58px;top:520.0px;width:25.5px;height:1.0px;background:#b0b0b0;"></div>
<div style="position:absolute;left:58px;top:541.1px;width:25.5px;height:1.0px;background:#b0b0b0;"></div>
<div style="position:absolute;left:58px;top:562.2px;width:25.5px;height:1.0px;background:#b0b0b0;"></div>
<div style="position:absolute;left:58px;top:583.3px;width:25.5px;height:1.0px;background:#b0b0b0;"></div>
<div style="position:absolute;left:58px;top:604.4px;width:25.5px;height:1.0px;background:#b0b0b0;"></div>
<div style="position:absolute;left:58px;top:625.5px;width:25.5px;height:1.0px;background:#b0b0b0;"></div>
<div style="position:absolute;left:58px;top:646.6px;width:25.5px;height:1.0px;background:#b0b0b0;"></div>
<div style="position:absolute;left:58px;top:667.7px;width:25.5px;height:1.0px;background:#b0b0b0;"></div>
<div style="position:absolute;left:58px;top:688.8px;width:25.5px;height:1.0px;background:#b0b0b0;"></div>
<div style="position:absolute;left:58px;top:709.9000000000001px;width:25.5px;height:1.0px;background:#b0b0b0;"></div>
<div style="position:absolute;left:58px;top:731.0px;width:25.5px;height:1.0px;background:#b0b0b0;"></div>
<div style="position:absolute;left:58px;top:752.1px;width:25.5px;height:1.0px;background:#b0b0b0;"></div>
<div style="position:absolute;left:58px;top:773.2px;width:25.5px;height:1.0px;background:#b0b0b0;"></div>
<div style="position:absolute;left:58px;top:794.3px;width:25.5px;height:1.0px;background:#b0b0b0;"></div>
<div style="position:absolute;left:58px;top:815.4000000000001px;width:25.5px;height:1.0px;background:#b0b0b0;"></div>
<div style="position:absolute;left:58px;top:836.5px;width:25.5px;height:1.0px;background:#b0b0b0;"></div>
<div style="position:absolute;left:58px;top:878.4px;width:25.5px;height:1.0px;background:#b0b0b0;"></div>
<div style="position:absolute;left:167.2px;top:397.2px;width:1.0px;height:18.100000000000023px;background:#c4c4c4;"></div>
<div style="position:absolute;left:451.1px;top:397.2px;width:1.0px;height:18.100000000000023px;background:#c4c4c4;"></div>
<div style="position:absolute;left:697.9px;top:397.2px;width:1.0px;height:18.100000000000023px;background:#c4c4c4;"></div>
<div style="position:absolute;left:781.8px;top:397.2px;width:1.0px;height:18.100000000000023px;background:#c4c4c4;"></div>
<div style="position:absolute;left:865.8px;top:397.2px;width:1.0px;height:18.100000000000023px;background:#c4c4c4;"></div>
<div style="position:absolute;left:949.6px;top:397.2px;width:1.0px;height:18.100000000000023px;background:#c4c4c4;"></div>
<div style="position:absolute;left:1033.8px;top:397.2px;width:1.0px;height:18.100000000000023px;background:#c4c4c4;"></div>
<div style="position:absolute;left:1206.0px;top:397.2px;width:1.0px;height:18.100000000000023px;background:#c4c4c4;"></div>
<div style="position:absolute;left:58px;top:414.7px;width:1410.6px;height:1.2000000000000455px;background:#9f9f9f;"></div>
<div style="position:absolute;left:167.7px;top:413.90000000000003px;width:283.90000000000003px;height:2.0px;background:#217346;"></div>
<div style="position:absolute;left:83px;top:397.2px;width:2px;height:492.3px;background:#bfbfbf;"></div>
<div style="position:absolute;left:1468.1px;top:415.3px;width:1.2000000000000455px;height:474.2px;background:#a8a8a8;"></div>
<div style="position:absolute;left:1469px;top:395.2px;width:23px;height:494.3px;background:#e6e6e6;"></div>
<div style="position:absolute;left:1472.5px;top:412px;width:15.299999999999955px;height:463.5px;background:#d9d9d9;"></div>
<div style="position:absolute;left:1472.5px;top:397.5px;width:15.299999999999955px;height:14.699999999999989px;background:#fff;box-sizing:border-box;border:1px solid #b8b8b8;"></div>
<svg style="position:absolute;left:1475px;top:400px;" width="11" height="8" viewBox="0 0 11 8"><path d="M1.5 6 L5.5 2 L9.5 6 Z" fill="#666"/></svg>
<div style="position:absolute;left:1472.5px;top:413.3px;width:15.299999999999955px;height:42.30000000000001px;background:#fff;box-sizing:border-box;border:1px solid #b4b4b4;"></div>
<div style="position:absolute;left:1472.5px;top:875.5px;width:15.299999999999955px;height:14.5px;background:#fff;box-sizing:border-box;border:1px solid #b8b8b8;"></div>
<svg style="position:absolute;left:1475px;top:879px;" width="11" height="8" viewBox="0 0 11 8"><path d="M1.5 2 L5.5 6 L9.5 2 Z" fill="#666"/></svg>
<div style="position:absolute;left:58px;top:942.3px;width:1434px;height:40.90000000000009px;background:linear-gradient(90deg,#22363f 0%,#22353f 45%,#1f3140 60%,#1b2a44 75%,#1a2846 100%);"></div>
<svg style="position:absolute;left:73px;top:953px;" width="20" height="20" viewBox="0 0 20 20"><path d="M1 3.2 L8 2.2 V9.3 H1 Z M9.3 2 L18.5 0.8 V9.3 H9.3 Z M1 10.6 H8 V17.7 L1 16.7 Z M9.3 10.6 H18.5 V19 L9.3 17.9 Z" fill="#ffffff"/></svg>
<div style="position:absolute;left:108px;top:942.3px;width:302.2px;height:40.90000000000009px;background:#f1f1f1;box-sizing:border-box;border-top:1px solid #cfcfcf;border-bottom:1px solid #dcdcdc;"></div>
<svg style="position:absolute;left:119px;top:954px;" width="20" height="19" viewBox="0 0 20 19"><circle cx="12" cy="7" r="5.6" fill="none" stroke="#333" stroke-width="1.3"/>
<path d="M8 11 L1.5 17.5" stroke="#333" stroke-width="1.5"/></svg>
<svg style="position:absolute;left:425px;top:953px;" width="21" height="19" viewBox="0 0 21 19"><path d="M2.6 1.2 V3.9 H13.2 V1.2 M2.6 17.8 V15.1 H13.2 V17.8" fill="none" stroke="#eef3f5" stroke-width="1.3"/>
<rect x="2.6" y="6.3" width="10.6" height="6.6" fill="none" stroke="#ffffff" stroke-width="1.3"/>
<path d="M17 1.2 V4.6" stroke="#8ea1aa" stroke-width="1.3"/><rect x="15.4" y="6.4" width="3.2" height="2.8" fill="#fff"/>
<path d="M17 10 V17.6" stroke="#b4c2c8" stroke-width="1.3"/></svg>
<svg style="position:absolute;left:475px;top:949.5px;" width="27" height="27" viewBox="0 0 27 27"><defs><linearGradient id="eg1" x1="0.1" y1="0.2" x2="0.95" y2="0.6"><stop offset="0" stop-color="#2fb4ee"/><stop offset="0.55" stop-color="#22bfb0"/><stop offset="1" stop-color="#5fdc52"/></linearGradient>
<linearGradient id="eg2" x1="0" y1="0" x2="0.3" y2="1"><stop offset="0" stop-color="#1d93e0"/><stop offset="1" stop-color="#0b56a8"/></linearGradient></defs>
<path d="M1 12 Q2 1 13.5 0.8 Q25 1 26 12.5 Q26.3 18.5 22 20 Q17 21.5 15 17.5 Q19 17 19.5 14 Q19 9.5 13 9.5 Q5 10 1 12 Z" fill="url(#eg1)"/>
<path d="M1 12 Q5 9 12 9.8 Q7 11 8 16 Q9.5 22 16.5 22.5 Q20.5 22.5 24 20.5 Q21 25.5 15 26.3 Q1.5 27 0.7 14 Z" fill="url(#eg2)"/>
<path d="M12.5 10.6 Q16.5 10.3 17.8 13 Q15.5 12.3 13.6 13.1 Q12 13.9 12.2 15.8 Q10 14.8 10.3 12.8 Q10.8 11.1 12.5 10.6 Z" fill="#1f3440" opacity="0.9"/></svg>
<svg style="position:absolute;left:527px;top:951px;" width="26" height="23" viewBox="0 0 26 23"><path d="M1.5 2.5 Q1.5 1.5 2.5 1.5 H9 L10.5 3 H22.5 Q24 3 24 4.5 V21 H1.5 Z" fill="#e5a51f"/>
<path d="M1.5 4.8 H24 V21 H1.5 Z" fill="#fdd46b"/>
<path d="M6.5 21.5 V13 H18.5 V21.5 H15 V16.2 H10 V21.5 Z" fill="#3d9ae3"/>
<rect x="10" y="16.2" width="5" height="3.5" fill="#f5c443"/></svg>
<div style="position:absolute;left:519.5px;top:981.2px;width:41.299999999999955px;height:2.0px;background:#9ccbf1;"></div>
<svg style="position:absolute;left:578px;top:949px;" width="27" height="28" viewBox="0 0 27 28"><defs><radialGradient id="ff1" cx="0.75" cy="0.25" r="0.9"><stop offset="0" stop-color="#ffe83a"/><stop offset="0.35" stop-color="#ffb324"/><stop offset="0.7" stop-color="#ff4f2b"/><stop offset="1" stop-color="#f01c5a"/></radialGradient></defs>
<path d="M13.5 27 C6 27 1 21.5 1 15 C1 12 2 9.5 3.5 7.5 L4.5 10 L6 6.5 L7.5 9 C9 7.5 11 7 13 7.2 C16 7.5 18.5 9.5 19 12 C19 8 17.5 5 16.5 1 C22.5 4 26 9.5 26 15.5 C26 22 20.5 27 13.5 27 Z" fill="url(#ff1)"/>
<circle cx="12.6" cy="15.6" r="5.6" fill="#8440d8"/><circle cx="13" cy="15" r="3.2" fill="#b76cf2"/>
<path d="M4 12 C6 9 9.5 8.5 12 9.5 C10 10.5 8.5 11.5 8 13.5 Z" fill="#ff8a20"/>
<path d="M18.5 13 C19.5 18 16.5 21.5 12.5 21.5 C16 23 21 20.5 21 15.5 Z" fill="#ff5a2a" opacity="0.9"/></svg>
<svg style="position:absolute;left:629.5px;top:949.3px;" width="27" height="27" viewBox="0 0 27 27"><path d="M13.5 13.5 L24.76 7 A13 13 0 0 0 2.24 7 Z" fill="#e94335"/>
<path d="M13.5 13.5 L2.24 7 A13 13 0 0 0 13.5 26.5 Z" fill="#24a148"/>
<path d="M13.5 13.5 L13.5 26.5 A13 13 0 0 0 24.76 7 Z" fill="#fbc02d"/>
<circle cx="13.5" cy="13.5" r="6.3" fill="#ffffff"/><circle cx="13.5" cy="13.5" r="5" fill="#3b7ee6"/></svg>
<svg style="position:absolute;left:681.5px;top:949.3px;" width="27" height="27" viewBox="0 0 27 27"><path d="M13.5 13.5 L24.76 7 A13 13 0 0 0 2.24 7 Z" fill="#e94335"/>
<path d="M13.5 13.5 L2.24 7 A13 13 0 0 0 13.5 26.5 Z" fill="#24a148"/>
<path d="M13.5 13.5 L13.5 26.5 A13 13 0 0 0 24.76 7 Z" fill="#fbc02d"/>
<circle cx="13.5" cy="13.5" r="6.3" fill="#ffffff"/><circle cx="13.5" cy="13.5" r="5" fill="#3b7ee6"/></svg>
<svg style="position:absolute;left:694px;top:962px;" width="16" height="16" viewBox="0 0 16 16"><circle cx="7.5" cy="7.7" r="6.9" fill="#111" stroke="#f0f0f0" stroke-width="0.8" stroke-dasharray="0 22 14 100"/><path d="M4.3 13 Q3.8 4.6 7.5 3.6 Q11 4.6 10.8 13 Z" fill="#b9b9b9"/><ellipse cx="7.5" cy="7" rx="2.6" ry="3" fill="#dedede"/></svg>
<div style="position:absolute;left:673.6px;top:981.2px;width:41.69999999999993px;height:2.0px;background:#9ccbf1;"></div>
<svg style="position:absolute;left:732px;top:950px;" width="28" height="25" viewBox="0 0 28 25"><rect x="7" y="1" width="19.5" height="22.5" rx="1.5" fill="#41a5ee"/>
<rect x="7" y="8.5" width="19.5" height="7.5" fill="#2b7cd3"/><path d="M7 16 H26.5 V22 Q26.5 23.5 25 23.5 H8.5 Q7 23.5 7 22 Z" fill="#185abd"/>
<rect x="1" y="6" width="14" height="13" rx="1.2" fill="#185abd"/>
<text x="2.3" y="16.5" font-family="Liberation Sans" font-weight="bold" font-size="10.5" fill="#fff">W</text></svg>
<div style="position:absolute;left:725px;top:981.2px;width:42px;height:2.0px;background:#9ccbf1;"></div>
<div style="position:absolute;left:772px;top:942.3px;width:46.299999999999955px;height:40.90000000000009px;background:#4b5a62;"></div>
<div style="position:absolute;left:818.3px;top:942.3px;width:3.7000000000000455px;height:40.90000000000009px;background:#3b4a52;"></div>
<svg style="position:absolute;left:783.5px;top:950px;" width="28" height="25" viewBox="0 0 28 25"><rect x="7" y="1" width="19.5" height="22.5" rx="1.5" fill="#21a366"/>
<rect x="7" y="1" width="19.5" height="7.5" fill="#33c481"/><rect x="16.7" y="8.5" width="9.8" height="7.5" fill="#21a366"/>
<path d="M7 16 H26.5 V22 Q26.5 23.5 25 23.5 H8.5 Q7 23.5 7 22 Z" fill="#107c41"/>
<rect x="1" y="6" width="14" height="13" rx="1.2" fill="#107c41"/>
<text x="4" y="16.5" font-family="Liberation Sans" font-weight="bold" font-size="10.5" fill="#fff">X</text></svg>
<div style="position:absolute;left:772px;top:981.2px;width:46.299999999999955px;height:2.0px;background:#9ccbf1;"></div>
<svg style="position:absolute;left:1056px;top:949px;" width="29" height="27" viewBox="0 0 29 27"><defs><linearGradient id="sun" x1="0" y1="0" x2="1" y2="1"><stop offset="0" stop-color="#f3c02a"/><stop offset="1" stop-color="#f27a12"/></linearGradient>
<linearGradient id="cld" x1="0" y1="0" x2="0" y2="1"><stop offset="0" stop-color="#a9c4ec"/><stop offset="1" stop-color="#dbe8fb"/></linearGradient></defs>
<circle cx="11.6" cy="17.4" r="8.3" fill="url(#sun)"/>
<path d="M2.2 8.5 Q2 5.6 4.8 5.4 Q5.6 1.4 9.3 1.6 Q12.6 1.8 13 5.2 Q14.6 5.6 14.3 8.2 Q14.1 10.2 12 10.2 H4 Q2.3 10.2 2.2 8.5 Z" fill="url(#cld)"/>
<path d="M12.6 21.2 Q12.6 18.3 15.5 18 Q16.4 14.6 20 14.8 Q23.4 15 23.8 18.2 Q26.8 18.5 26.8 21 Q26.8 23.3 24.5 23.3 H14.5 Q12.6 23.3 12.6 21.2 Z" fill="url(#cld)"/>
<circle cx="20.6" cy="7" r="5.8" fill="#c92f26"/>
<path d="M19.2 4.6 L21.2 3.4 V10.6" fill="none" stroke="#f6a29b" stroke-width="1.5"/></svg>
<svg style="position:absolute;left:1240px;top:957px;" width="16" height="11" viewBox="0 0 16 11"><path d="M1.5 8.5 L8 2 L14.5 8.5" fill="none" stroke="#fff" stroke-width="1.2"/></svg>
<svg style="position:absolute;left:1267px;top:953px;" width="16" height="20" viewBox="0 0 16 20"><rect x="2" y="5.5" width="8" height="9" rx="1.5" fill="none" stroke="#fff" stroke-width="1.1"/>
<path d="M10 8.5 L13.5 6.5 V13.5 L10 11.5" fill="none" stroke="#fff" stroke-width="1.1"/>
<path d="M3 2.5 Q7 0.5 11 2.5 M3 17.5 Q7 19.5 11 17.5" fill="none" stroke="#fff" stroke-width="1"/></svg>
<svg style="position:absolute;left:1289px;top:953px;" width="21" height="20" viewBox="0 0 21 20"><path d="M2 4.5 L17 2 V14 L2 15.5 Z" fill="none" stroke="#fff" stroke-width="1.1"/>
<path d="M6 11 L11 6 M8 6 H11 V9" fill="none" stroke="#fff" stroke-width="1"/>
<circle cx="15.5" cy="15" r="3" fill="#2d7fe0"/></svg>
<svg style="position:absolute;left:1314px;top:955px;" width="21" height="17" viewBox="0 0 21 17"><rect x="5.5" y="3.5" width="14" height="9" fill="none" stroke="#fff" stroke-width="1.1"/>
<rect x="1.5" y="1" width="4.5" height="4" fill="none" stroke="#fff" stroke-width="1"/>
<path d="M3.7 5 V14 M12.5 12.5 V15.5 M9 15.5 H16" fill="none" stroke="#fff" stroke-width="1.1"/></svg>
<svg style="position:absolute;left:1340px;top:954px;" width="20" height="18" viewBox="0 0 20 18"><path d="M1.5 6 H5 L9.5 2 V16 L5 12 H1.5 Z" fill="none" stroke="#fff" stroke-width="1.1"/>
<path d="M12 6.5 Q13.5 9 12 11.5 M14.5 4.5 Q17 9 14.5 13.5 M17 2.5 Q20.5 9 17 15.5" fill="none" stroke="#fff" stroke-width="1"/></svg>
<svg style="position:absolute;left:1447px;top:953px;" width="20" height="20" viewBox="0 0 20 20"><path d="M1.5 2 H17.5 V14 H11 L8 17.5 L8 14 H1.5 Z" fill="none" stroke="#fff" stroke-width="1.2"/></svg>
<div style="position:absolute;left:1486px;top:942.3px;width:1.2000000000000455px;height:40.90000000000009px;background:#3b4a60;"></div>
<div style="position:absolute;left:294.59px;top:186.94px;font-family:'Liberation Sans',sans-serif;font-size:13px;font-weight:normal;color:#f4faf6;white-space:pre;line-height:normal;transform:scaleX(0.9062);transform-origin:0 0;">INFORMACION CEMENTERIO  -  Excel</div>
<div style="position:absolute;left:641.29px;top:188.54px;font-family:'Liberation Sans',sans-serif;font-size:13px;font-weight:normal;color:#245a39;white-space:pre;line-height:normal;transform:scaleX(0.9172);transform-origin:0 0;">Buscar</div>
<div style="position:absolute;left:1229.03px;top:188.99px;font-family:'Liberation Sans',sans-serif;font-size:12.5px;font-weight:normal;color:#217346;white-space:pre;line-height:normal;transform:scaleX(0.9699);transform-origin:0 0;">Inic. ses.</div>
<div style="position:absolute;left:72.00px;top:222.44px;font-family:'Liberation Sans',sans-serif;font-size:13px;font-weight:normal;color:#484644;white-space:pre;line-height:normal;transform:scaleX(1.0344);transform-origin:0 0;">Archivo</div>
<div style="position:absolute;left:146.85px;top:222.44px;font-family:'Liberation Sans',sans-serif;font-size:13px;font-weight:normal;color:#252423;white-space:pre;line-height:normal;transform:scaleX(1.1507);transform-origin:0 0;">Inicio</div>
<div style="position:absolute;left:209.45px;top:222.44px;font-family:'Liberation Sans',sans-serif;font-size:13px;font-weight:normal;color:#484644;white-space:pre;line-height:normal;transform:scaleX(1.0610);transform-origin:0 0;">Insertar</div>
<div style="position:absolute;left:287.22px;top:222.44px;font-family:'Liberation Sans',sans-serif;font-size:13px;font-weight:normal;color:#484644;white-space:pre;line-height:normal;transform:scaleX(1.0759);transform-origin:0 0;">Disposición de página</div>
<div style="position:absolute;left:453.34px;top:222.44px;font-family:'Liberation Sans',sans-serif;font-size:13px;font-weight:normal;color:#484644;white-space:pre;line-height:normal;transform:scaleX(1.0528);transform-origin:0 0;">Fórmulas</div>
<div style="position:absolute;left:539.82px;top:222.44px;font-family:'Liberation Sans',sans-serif;font-size:13px;font-weight:normal;color:#484644;white-space:pre;line-height:normal;transform:scaleX(1.0860);transform-origin:0 0;">Datos</div>
<div style="position:absolute;left:605.49px;top:222.44px;font-family:'Liberation Sans',sans-serif;font-size:13px;font-weight:normal;color:#484644;white-space:pre;line-height:normal;transform:scaleX(1.0039);transform-origin:0 0;">Revisar</div>
<div style="position:absolute;left:679.78px;top:222.44px;font-family:'Liberation Sans',sans-serif;font-size:13px;font-weight:normal;color:#484644;white-space:pre;line-height:normal;transform:scaleX(1.0069);transform-origin:0 0;">Vista</div>
<div style="position:absolute;left:739.78px;top:222.44px;font-family:'Liberation Sans',sans-serif;font-size:13px;font-weight:normal;color:#484644;white-space:pre;line-height:normal;transform:scaleX(1.0226);transform-origin:0 0;">Ayuda</div>
<div style="position:absolute;left:808.28px;top:222.44px;font-family:'Liberation Sans',sans-serif;font-size:13px;font-weight:normal;color:#484644;white-space:pre;line-height:normal;transform:scaleX(1.1187);transform-origin:0 0;">Nitro Pro</div>
<div style="position:absolute;left:895.70px;top:222.44px;font-family:'Liberation Sans',sans-serif;font-size:13px;font-weight:normal;color:#484644;white-space:pre;line-height:normal;transform:scaleX(1.0713);transform-origin:0 0;">Acrobat</div>
<div style="position:absolute;left:1404.50px;top:222.08px;font-family:'Liberation Sans',sans-serif;font-size:13.5px;font-weight:normal;color:#217346;white-space:pre;line-height:normal;transform:scaleX(1.0592);transform-origin:0 0;-webkit-text-stroke:0.45px #217346;">Compartir</div>
<div style="position:absolute;left:69.47px;top:363.74px;font-family:'Liberation Sans',sans-serif;font-size:13px;font-weight:normal;color:#262626;white-space:pre;line-height:normal;transform:scaleX(1.0298);transform-origin:0 0;">B226</div>
<div style="position:absolute;left:331.48px;top:363.74px;font-family:'Liberation Sans',sans-serif;font-size:13px;font-weight:normal;color:#262626;white-space:pre;line-height:normal;transform:scaleX(1.0744);transform-origin:0 0;">Garaicoa Alvarado Roxana</div>
<div style="position:absolute;left:174.75px;top:895.91px;font-family:'Liberation Sans',sans-serif;font-size:13.8px;font-weight:bold;color:#217346;white-space:pre;line-height:normal;transform:scaleX(0.9645);transform-origin:0 0;">Hoja1</div>
<div style="position:absolute;left:64.53px;top:924.54px;font-family:'Liberation Sans',sans-serif;font-size:12px;font-weight:normal;color:#444444;white-space:pre;line-height:normal;">Listo</div>
<div style="position:absolute;left:1450.96px;top:924.19px;font-family:'Liberation Sans',sans-serif;font-size:11.5px;font-weight:normal;color:#666666;white-space:pre;line-height:normal;transform:scaleX(0.9831);transform-origin:0 0;">100 %</div>
<div style="position:absolute;left:71.85px;top:288.99px;font-family:'Liberation Sans',sans-serif;font-size:12.5px;font-weight:normal;color:#444444;white-space:pre;line-height:normal;transform:scaleX(0.9537);transform-origin:0 0;">Pegar</div>
<div style="position:absolute;left:62.97px;top:331.09px;font-family:'Liberation Sans',sans-serif;font-size:11.5px;font-weight:normal;color:#444444;white-space:pre;line-height:normal;transform:scaleX(1.0445);transform-origin:0 0;">Portapapeles</div>
<div style="position:absolute;left:168.89px;top:262.49px;font-family:'Liberation Sans',sans-serif;font-size:12.5px;font-weight:normal;color:#262626;white-space:pre;line-height:normal;transform:scaleX(1.0310);transform-origin:0 0;">Calibri</div>
<div style="position:absolute;left:300.90px;top:262.49px;font-family:'Liberation Sans',sans-serif;font-size:12.5px;font-weight:normal;color:#262626;white-space:pre;line-height:normal;transform:scaleX(0.9237);transform-origin:0 0;">11</div>
<div style="position:absolute;left:349.23px;top:258.87px;font-family:'Liberation Sans',sans-serif;font-size:16.5px;font-weight:normal;color:#444444;white-space:pre;line-height:normal;transform:scaleX(0.8390);transform-origin:0 0;">A</div>
<div style="position:absolute;left:375.70px;top:262.49px;font-family:'Liberation Sans',sans-serif;font-size:12.5px;font-weight:normal;color:#444444;white-space:pre;line-height:normal;transform:scaleX(0.9816);transform-origin:0 0;">A</div>
<div style="position:absolute;left:170.78px;top:294.43px;font-family:'Liberation Sans',sans-serif;font-size:14px;font-weight:bold;color:#333;white-space:pre;line-height:normal;transform:scaleX(1.1791);transform-origin:0 0;">N</div>
<div style="position:absolute;left:199.56px;top:294.43px;font-family:'Liberation Sans',sans-serif;font-size:14px;font-weight:normal;color:#555;white-space:pre;line-height:normal;transform:scaleX(1.0254);transform-origin:0 0;font-style:italic;">K</div>
<div style="position:absolute;left:223.60px;top:294.43px;font-family:'Liberation Sans',sans-serif;font-size:14px;font-weight:normal;color:#555;white-space:pre;line-height:normal;transform:scaleX(1.0159);transform-origin:0 0;">S</div>
<div style="position:absolute;left:361.00px;top:292.58px;font-family:'Liberation Sans',sans-serif;font-size:13.5px;font-weight:normal;color:#444444;white-space:pre;line-height:normal;transform:scaleX(1.0458);transform-origin:0 0;">A</div>
<div style="position:absolute;left:251.06px;top:330.79px;font-family:'Liberation Sans',sans-serif;font-size:11.5px;font-weight:normal;color:#444444;white-space:pre;line-height:normal;transform:scaleX(1.0828);transform-origin:0 0;">Fuente</div>
<div style="position:absolute;left:574.00px;top:262.69px;font-family:'Liberation Sans',sans-serif;font-size:12.5px;font-weight:normal;color:#444444;white-space:pre;line-height:normal;transform:scaleX(1.0098);transform-origin:0 0;">Ajustar texto</div>
<div style="position:absolute;left:572.99px;top:296.69px;font-family:'Liberation Sans',sans-serif;font-size:12.5px;font-weight:normal;color:#444444;white-space:pre;line-height:normal;transform:scaleX(1.0121);transform-origin:0 0;">Combinar y centrar</div>
<div style="position:absolute;left:520.00px;top:330.59px;font-family:'Liberation Sans',sans-serif;font-size:11.5px;font-weight:normal;color:#444444;white-space:pre;line-height:normal;transform:scaleX(1.0728);transform-origin:0 0;">Alineación</div>
<div style="position:absolute;left:725.81px;top:262.79px;font-family:'Liberation Sans',sans-serif;font-size:12.5px;font-weight:normal;color:#262626;white-space:pre;line-height:normal;transform:scaleX(0.9339);transform-origin:0 0;">General</div>
<div style="position:absolute;left:764.93px;top:293.26px;font-family:'Liberation Sans',sans-serif;font-size:18.5px;font-weight:normal;color:#555;white-space:pre;line-height:normal;transform:scaleX(1.0667);transform-origin:0 0;">%</div>
<div style="position:absolute;left:791.00px;top:296.55px;font-family:'Liberation Sans',sans-serif;font-size:10px;font-weight:normal;color:#7a7a7a;white-space:pre;line-height:normal;transform:scaleX(1.0063);transform-origin:0 0;">000</div>
<div style="position:absolute;left:764.78px;top:330.99px;font-family:'Liberation Sans',sans-serif;font-size:11.5px;font-weight:normal;color:#444444;white-space:pre;line-height:normal;transform:scaleX(1.0471);transform-origin:0 0;">Número</div>
<div style="position:absolute;left:901.78px;top:288.99px;font-family:'Liberation Sans',sans-serif;font-size:12.5px;font-weight:normal;color:#444444;white-space:pre;line-height:normal;transform:scaleX(1.0136);transform-origin:0 0;">Formato</div>
<div style="position:absolute;left:888.00px;top:305.69px;font-family:'Liberation Sans',sans-serif;font-size:12.5px;font-weight:normal;color:#444444;white-space:pre;line-height:normal;transform:scaleX(1.0686);transform-origin:0 0;">condicional</div>
<div style="position:absolute;left:972.96px;top:288.99px;font-family:'Liberation Sans',sans-serif;font-size:12.5px;font-weight:normal;color:#444444;white-space:pre;line-height:normal;transform:scaleX(1.0364);transform-origin:0 0;">Dar formato</div>
<div style="position:absolute;left:970.00px;top:305.69px;font-family:'Liberation Sans',sans-serif;font-size:12.5px;font-weight:normal;color:#444444;white-space:pre;line-height:normal;transform:scaleX(1.0132);transform-origin:0 0;">como tabla</div>
<div style="position:absolute;left:1048.51px;top:288.99px;font-family:'Liberation Sans',sans-serif;font-size:12.5px;font-weight:normal;color:#444444;white-space:pre;line-height:normal;transform:scaleX(0.9787);transform-origin:0 0;">Estilos de</div>
<div style="position:absolute;left:1055.00px;top:305.69px;font-family:'Liberation Sans',sans-serif;font-size:12.5px;font-weight:normal;color:#444444;white-space:pre;line-height:normal;transform:scaleX(1.0691);transform-origin:0 0;">celda</div>
<div style="position:absolute;left:976.45px;top:330.59px;font-family:'Liberation Sans',sans-serif;font-size:11.5px;font-weight:normal;color:#444444;white-space:pre;line-height:normal;transform:scaleX(1.0127);transform-origin:0 0;">Estilos</div>
<div style="position:absolute;left:1143.53px;top:253.09px;font-family:'Liberation Sans',sans-serif;font-size:12.5px;font-weight:normal;color:#444444;white-space:pre;line-height:normal;transform:scaleX(0.9705);transform-origin:0 0;">Insertar</div>
<div style="position:absolute;left:1143.51px;top:277.29px;font-family:'Liberation Sans',sans-serif;font-size:12.5px;font-weight:normal;color:#444444;white-space:pre;line-height:normal;">Eliminar</div>
<div style="position:absolute;left:1143.49px;top:300.99px;font-family:'Liberation Sans',sans-serif;font-size:12.5px;font-weight:normal;color:#444444;white-space:pre;line-height:normal;transform:scaleX(1.0156);transform-origin:0 0;">Formato</div>
<div style="position:absolute;left:1148.40px;top:330.59px;font-family:'Liberation Sans',sans-serif;font-size:11.5px;font-weight:normal;color:#444444;white-space:pre;line-height:normal;transform:scaleX(0.9573);transform-origin:0 0;">Celdas</div>
<div style="position:absolute;left:1272.21px;top:288.99px;font-family:'Liberation Sans',sans-serif;font-size:12.5px;font-weight:normal;color:#444444;white-space:pre;line-height:normal;transform:scaleX(0.9552);transform-origin:0 0;">Ordenar y</div>
<div style="position:absolute;left:1279.00px;top:305.69px;font-family:'Liberation Sans',sans-serif;font-size:12.5px;font-weight:normal;color:#444444;white-space:pre;line-height:normal;transform:scaleX(1.1226);transform-origin:0 0;">filtrar</div>
<div style="position:absolute;left:1344.44px;top:288.99px;font-family:'Liberation Sans',sans-serif;font-size:12.5px;font-weight:normal;color:#444444;white-space:pre;line-height:normal;transform:scaleX(0.9594);transform-origin:0 0;">Buscar y</div>
<div style="position:absolute;left:1332.00px;top:305.69px;font-family:'Liberation Sans',sans-serif;font-size:12.5px;font-weight:normal;color:#444444;white-space:pre;line-height:normal;transform:scaleX(1.0070);transform-origin:0 0;">seleccionar</div>
<div style="position:absolute;left:1297.45px;top:330.59px;font-family:'Liberation Sans',sans-serif;font-size:11.5px;font-weight:normal;color:#444444;white-space:pre;line-height:normal;transform:scaleX(1.0596);transform-origin:0 0;">Edición</div>
<div style="position:absolute;left:121.80px;top:398.09px;font-family:'Liberation Sans',sans-serif;font-size:12.5px;font-weight:normal;color:#333333;white-space:pre;line-height:normal;">A</div>
<div style="position:absolute;left:305.45px;top:398.09px;font-family:'Liberation Sans',sans-serif;font-size:12.5px;font-weight:normal;color:#217346;white-space:pre;line-height:normal;">B</div>
<div style="position:absolute;left:570.50px;top:398.09px;font-family:'Liberation Sans',sans-serif;font-size:12.5px;font-weight:normal;color:#333333;white-space:pre;line-height:normal;">C</div>
<div style="position:absolute;left:735.55px;top:398.09px;font-family:'Liberation Sans',sans-serif;font-size:12.5px;font-weight:normal;color:#333333;white-space:pre;line-height:normal;">D</div>
<div style="position:absolute;left:819.90px;top:398.09px;font-family:'Liberation Sans',sans-serif;font-size:12.5px;font-weight:normal;color:#333333;white-space:pre;line-height:normal;">E</div>
<div style="position:absolute;left:904.10px;top:398.09px;font-family:'Liberation Sans',sans-serif;font-size:12.5px;font-weight:normal;color:#333333;white-space:pre;line-height:normal;">F</div>
<div style="position:absolute;left:987.10px;top:398.09px;font-family:'Liberation Sans',sans-serif;font-size:12.5px;font-weight:normal;color:#333333;white-space:pre;line-height:normal;">G</div>
<div style="position:absolute;left:1115.70px;top:398.09px;font-family:'Liberation Sans',sans-serif;font-size:12.5px;font-weight:normal;color:#333333;white-space:pre;line-height:normal;">H</div>
<div style="position:absolute;left:1340.70px;top:398.09px;font-family:'Liberation Sans',sans-serif;font-size:12.5px;font-weight:normal;color:#333333;white-space:pre;line-height:normal;">I</div>
<div style="position:absolute;left:67.32px;top:420.28px;font-family:'Liberation Sans',sans-serif;font-size:13.5px;font-weight:normal;color:#333333;white-space:pre;line-height:normal;transform:scaleX(0.9200);transform-origin:0 0;">1</div>
<div style="position:absolute;left:66.78px;top:462.18px;font-family:'Liberation Sans',sans-serif;font-size:13.5px;font-weight:normal;color:#333333;white-space:pre;line-height:normal;transform:scaleX(0.9200);transform-origin:0 0;">2</div>
<div style="position:absolute;left:66.78px;top:483.28px;font-family:'Liberation Sans',sans-serif;font-size:13.5px;font-weight:normal;color:#333333;white-space:pre;line-height:normal;transform:scaleX(0.9200);transform-origin:0 0;">3</div>
<div style="position:absolute;left:67.32px;top:504.38px;font-family:'Liberation Sans',sans-serif;font-size:13.5px;font-weight:normal;color:#333333;white-space:pre;line-height:normal;transform:scaleX(0.9200);transform-origin:0 0;">4</div>
<div style="position:absolute;left:66.78px;top:525.48px;font-family:'Liberation Sans',sans-serif;font-size:13.5px;font-weight:normal;color:#333333;white-space:pre;line-height:normal;transform:scaleX(0.9200);transform-origin:0 0;">5</div>
<div style="position:absolute;left:66.78px;top:546.58px;font-family:'Liberation Sans',sans-serif;font-size:13.5px;font-weight:normal;color:#333333;white-space:pre;line-height:normal;transform:scaleX(0.9200);transform-origin:0 0;">6</div>
<div style="position:absolute;left:66.78px;top:567.68px;font-family:'Liberation Sans',sans-serif;font-size:13.5px;font-weight:normal;color:#333333;white-space:pre;line-height:normal;transform:scaleX(0.9200);transform-origin:0 0;">7</div>
<div style="position:absolute;left:67.78px;top:588.78px;font-family:'Liberation Sans',sans-serif;font-size:13.5px;font-weight:normal;color:#333333;white-space:pre;line-height:normal;transform:scaleX(0.9200);transform-origin:0 0;">8</div>
<div style="position:absolute;left:66.78px;top:609.88px;font-family:'Liberation Sans',sans-serif;font-size:13.5px;font-weight:normal;color:#333333;white-space:pre;line-height:normal;transform:scaleX(0.9200);transform-origin:0 0;">9</div>
<div style="position:absolute;left:63.87px;top:630.98px;font-family:'Liberation Sans',sans-serif;font-size:13.5px;font-weight:normal;color:#333333;white-space:pre;line-height:normal;transform:scaleX(0.9200);transform-origin:0 0;">10</div>
<div style="position:absolute;left:64.33px;top:652.08px;font-family:'Liberation Sans',sans-serif;font-size:13.5px;font-weight:normal;color:#333333;white-space:pre;line-height:normal;transform:scaleX(0.9200);transform-origin:0 0;">11</div>
<div style="position:absolute;left:63.87px;top:673.18px;font-family:'Liberation Sans',sans-serif;font-size:13.5px;font-weight:normal;color:#333333;white-space:pre;line-height:normal;transform:scaleX(0.9200);transform-origin:0 0;">12</div>
<div style="position:absolute;left:63.87px;top:694.28px;font-family:'Liberation Sans',sans-serif;font-size:13.5px;font-weight:normal;color:#333333;white-space:pre;line-height:normal;transform:scaleX(0.9200);transform-origin:0 0;">13</div>
<div style="position:absolute;left:63.41px;top:715.38px;font-family:'Liberation Sans',sans-serif;font-size:13.5px;font-weight:normal;color:#333333;white-space:pre;line-height:normal;transform:scaleX(0.9200);transform-origin:0 0;">14</div>
<div style="position:absolute;left:63.87px;top:736.48px;font-family:'Liberation Sans',sans-serif;font-size:13.5px;font-weight:normal;color:#333333;white-space:pre;line-height:normal;transform:scaleX(0.9200);transform-origin:0 0;">15</div>
<div style="position:absolute;left:63.87px;top:757.58px;font-family:'Liberation Sans',sans-serif;font-size:13.5px;font-weight:normal;color:#333333;white-space:pre;line-height:normal;transform:scaleX(0.9200);transform-origin:0 0;">16</div>
<div style="position:absolute;left:63.87px;top:778.68px;font-family:'Liberation Sans',sans-serif;font-size:13.5px;font-weight:normal;color:#333333;white-space:pre;line-height:normal;transform:scaleX(0.9200);transform-origin:0 0;">17</div>
<div style="position:absolute;left:63.87px;top:799.78px;font-family:'Liberation Sans',sans-serif;font-size:13.5px;font-weight:normal;color:#333333;white-space:pre;line-height:normal;transform:scaleX(0.9200);transform-origin:0 0;">18</div>
<div style="position:absolute;left:63.87px;top:820.88px;font-family:'Liberation Sans',sans-serif;font-size:13.5px;font-weight:normal;color:#333333;white-space:pre;line-height:normal;transform:scaleX(0.9200);transform-origin:0 0;">19</div>
<div style="position:absolute;left:63.33px;top:862.78px;font-family:'Liberation Sans',sans-serif;font-size:13.5px;font-weight:normal;color:#333333;white-space:pre;line-height:normal;transform:scaleX(0.9200);transform-origin:0 0;">20</div>
<div style="position:absolute;left:58px;top:395px;width:1434px;height:494.5px;overflow:hidden"><div style="position:absolute;left:-58px;top:-395px"><div style="position:absolute;left:63.33px;top:882.78px;font-family:'Liberation Sans',sans-serif;font-size:13.5px;font-weight:normal;color:#333333;white-space:pre;line-height:normal;transform:scaleX(0.9200);transform-origin:0 0;">21</div></div></div>
<div style="position:absolute;left:238.20px;top:462.18px;font-family:'Liberation Sans',sans-serif;font-size:13.5px;font-weight:normal;color:#1f1f1f;white-space:pre;line-height:normal;transform:scaleX(0.9486);transform-origin:0 0;-webkit-text-stroke:0.12px #1f1f1f;">NOMBRES DEL DUEÑO</div>
<div style="position:absolute;left:489.81px;top:440.98px;font-family:'Liberation Sans',sans-serif;font-size:13.5px;font-weight:normal;color:#1f1f1f;white-space:pre;line-height:normal;transform:scaleX(0.9372);transform-origin:0 0;-webkit-text-stroke:0.12px #1f1f1f;">NOMBRES DE LA PERSONA</div>
<div style="position:absolute;left:537.29px;top:462.18px;font-family:'Liberation Sans',sans-serif;font-size:13.5px;font-weight:normal;color:#1f1f1f;white-space:pre;line-height:normal;transform:scaleX(0.9507);transform-origin:0 0;-webkit-text-stroke:0.12px #1f1f1f;">SEPULTADA</div>
<div style="position:absolute;left:701.80px;top:462.18px;font-family:'Liberation Sans',sans-serif;font-size:13.5px;font-weight:normal;color:#1f1f1f;white-space:pre;line-height:normal;transform:scaleX(0.9630);transform-origin:0 0;-webkit-text-stroke:0.12px #1f1f1f;">ZONA</div>
<div style="position:absolute;left:784.55px;top:462.18px;font-family:'Liberation Sans',sans-serif;font-size:13.5px;font-weight:normal;color:#1f1f1f;white-space:pre;line-height:normal;transform:scaleX(0.9515);transform-origin:0 0;-webkit-text-stroke:0.12px #1f1f1f;">NICHOS</div>
<div style="position:absolute;left:868.55px;top:462.18px;font-family:'Liberation Sans',sans-serif;font-size:13.5px;font-weight:normal;color:#1f1f1f;white-space:pre;line-height:normal;transform:scaleX(0.9461);transform-origin:0 0;-webkit-text-stroke:0.12px #1f1f1f;">BOVEDAS</div>
<div style="position:absolute;left:952.90px;top:462.18px;font-family:'Liberation Sans',sans-serif;font-size:13.5px;font-weight:normal;color:#1f1f1f;white-space:pre;line-height:normal;transform:scaleX(0.8800);transform-origin:0 0;-webkit-text-stroke:0.12px #1f1f1f;">TERRENOS</div>
<div style="position:absolute;left:1037.50px;top:462.18px;font-family:'Liberation Sans',sans-serif;font-size:13.5px;font-weight:normal;color:#1f1f1f;white-space:pre;line-height:normal;transform:scaleX(0.9494);transform-origin:0 0;-webkit-text-stroke:0.12px #1f1f1f;">CODIGO</div>
<div style="position:absolute;left:1210.10px;top:462.18px;font-family:'Liberation Sans',sans-serif;font-size:13.5px;font-weight:normal;color:#1f1f1f;white-space:pre;line-height:normal;transform:scaleX(0.9740);transform-origin:0 0;-webkit-text-stroke:0.12px #1f1f1f;">ADMINISTRACIÓN DE DOCUMENTO</div>
<div style="position:absolute;left:156.88px;top:483.28px;font-family:'Liberation Sans',sans-serif;font-size:13.5px;font-weight:normal;color:#1f1f1f;white-space:pre;line-height:normal;transform:scaleX(1.0600);transform-origin:0 0;-webkit-text-stroke:0.12px #1f1f1f;">1</div>
<div style="position:absolute;left:169.65px;top:483.28px;font-family:'Liberation Sans',sans-serif;font-size:13.5px;font-weight:normal;color:#1f1f1f;white-space:pre;line-height:normal;transform:scaleX(1.0456);transform-origin:0 0;-webkit-text-stroke:0.12px #1f1f1f;">Maria Margarita Cardenas Rodriges</div>
<div style="position:absolute;left:771.68px;top:483.28px;font-family:'Liberation Sans',sans-serif;font-size:13.5px;font-weight:normal;color:#1f1f1f;white-space:pre;line-height:normal;transform:scaleX(1.0600);transform-origin:0 0;-webkit-text-stroke:0.12px #1f1f1f;">3</div>
<div style="position:absolute;left:1023.68px;top:483.28px;font-family:'Liberation Sans',sans-serif;font-size:13.5px;font-weight:normal;color:#1f1f1f;white-space:pre;line-height:normal;transform:scaleX(1.0600);transform-origin:0 0;-webkit-text-stroke:0.12px #1f1f1f;">3</div>
<div style="position:absolute;left:1209.06px;top:483.28px;font-family:'Liberation Sans',sans-serif;font-size:13.5px;font-weight:normal;color:#1f1f1f;white-space:pre;line-height:normal;transform:scaleX(1.0355);transform-origin:0 0;-webkit-text-stroke:0.12px #1f1f1f;">Eliana Moreno Guevara - 2019</div>
<div style="position:absolute;left:156.88px;top:504.38px;font-family:'Liberation Sans',sans-serif;font-size:13.5px;font-weight:normal;color:#1f1f1f;white-space:pre;line-height:normal;transform:scaleX(1.0600);transform-origin:0 0;-webkit-text-stroke:0.12px #1f1f1f;">2</div>
<div style="position:absolute;left:453.33px;top:504.38px;font-family:'Liberation Sans',sans-serif;font-size:13.5px;font-weight:normal;color:#1f1f1f;white-space:pre;line-height:normal;transform:scaleX(1.0675);transform-origin:0 0;-webkit-text-stroke:0.12px #1f1f1f;">Herrera Clavijo Petita Anastacia</div>
<div style="position:absolute;left:1209.06px;top:504.38px;font-family:'Liberation Sans',sans-serif;font-size:13.5px;font-weight:normal;color:#1f1f1f;white-space:pre;line-height:normal;transform:scaleX(1.0355);transform-origin:0 0;-webkit-text-stroke:0.12px #1f1f1f;">Eliana Moreno Guevara - 2019</div>
<div style="position:absolute;left:156.88px;top:525.48px;font-family:'Liberation Sans',sans-serif;font-size:13.5px;font-weight:normal;color:#1f1f1f;white-space:pre;line-height:normal;transform:scaleX(1.0600);transform-origin:0 0;-webkit-text-stroke:0.12px #1f1f1f;">3</div>
<div style="position:absolute;left:170.70px;top:525.48px;font-family:'Liberation Sans',sans-serif;font-size:13.5px;font-weight:normal;color:#1f1f1f;white-space:pre;line-height:normal;transform:scaleX(1.0847);transform-origin:0 0;-webkit-text-stroke:0.12px #1f1f1f;">Julio Ronquillo Montoya</div>
<div style="position:absolute;left:453.33px;top:525.48px;font-family:'Liberation Sans',sans-serif;font-size:13.5px;font-weight:normal;color:#1f1f1f;white-space:pre;line-height:normal;transform:scaleX(1.0668);transform-origin:0 0;-webkit-text-stroke:0.12px #1f1f1f;">Montoya Moran Paulina Sabina</div>
<div style="position:absolute;left:1209.06px;top:525.48px;font-family:'Liberation Sans',sans-serif;font-size:13.5px;font-weight:normal;color:#1f1f1f;white-space:pre;line-height:normal;transform:scaleX(1.0355);transform-origin:0 0;-webkit-text-stroke:0.12px #1f1f1f;">Eliana Moreno Guevara - 2019</div>
<div style="position:absolute;left:156.82px;top:546.58px;font-family:'Liberation Sans',sans-serif;font-size:13.5px;font-weight:normal;color:#1f1f1f;white-space:pre;line-height:normal;transform:scaleX(1.0600);transform-origin:0 0;-webkit-text-stroke:0.12px #1f1f1f;">4</div>
<div style="position:absolute;left:170.70px;top:546.58px;font-family:'Liberation Sans',sans-serif;font-size:13.5px;font-weight:normal;color:#1f1f1f;white-space:pre;line-height:normal;transform:scaleX(1.0847);transform-origin:0 0;-webkit-text-stroke:0.12px #1f1f1f;">Julio Ronquillo Montoya</div>
<div style="position:absolute;left:771.68px;top:546.58px;font-family:'Liberation Sans',sans-serif;font-size:13.5px;font-weight:normal;color:#1f1f1f;white-space:pre;line-height:normal;transform:scaleX(1.0600);transform-origin:0 0;-webkit-text-stroke:0.12px #1f1f1f;">1</div>
<div style="position:absolute;left:1023.68px;top:546.58px;font-family:'Liberation Sans',sans-serif;font-size:13.5px;font-weight:normal;color:#1f1f1f;white-space:pre;line-height:normal;transform:scaleX(1.0600);transform-origin:0 0;-webkit-text-stroke:0.12px #1f1f1f;">2</div>
<div style="position:absolute;left:1209.06px;top:546.58px;font-family:'Liberation Sans',sans-serif;font-size:13.5px;font-weight:normal;color:#1f1f1f;white-space:pre;line-height:normal;transform:scaleX(1.0355);transform-origin:0 0;-webkit-text-stroke:0.12px #1f1f1f;">Eliana Moreno Guevara - 2019</div>
<div style="position:absolute;left:156.88px;top:567.68px;font-family:'Liberation Sans',sans-serif;font-size:13.5px;font-weight:normal;color:#1f1f1f;white-space:pre;line-height:normal;transform:scaleX(1.0600);transform-origin:0 0;-webkit-text-stroke:0.12px #1f1f1f;">5</div>
<div style="position:absolute;left:169.68px;top:567.68px;font-family:'Liberation Sans',sans-serif;font-size:13.5px;font-weight:normal;color:#1f1f1f;white-space:pre;line-height:normal;transform:scaleX(1.0167);transform-origin:0 0;-webkit-text-stroke:0.12px #1f1f1f;">Evita Castro Peña</div>
<div style="position:absolute;left:771.68px;top:567.68px;font-family:'Liberation Sans',sans-serif;font-size:13.5px;font-weight:normal;color:#1f1f1f;white-space:pre;line-height:normal;transform:scaleX(1.0600);transform-origin:0 0;-webkit-text-stroke:0.12px #1f1f1f;">1</div>
<div style="position:absolute;left:1023.68px;top:567.68px;font-family:'Liberation Sans',sans-serif;font-size:13.5px;font-weight:normal;color:#1f1f1f;white-space:pre;line-height:normal;transform:scaleX(1.0600);transform-origin:0 0;-webkit-text-stroke:0.12px #1f1f1f;">2</div>
<div style="position:absolute;left:1209.06px;top:567.68px;font-family:'Liberation Sans',sans-serif;font-size:13.5px;font-weight:normal;color:#1f1f1f;white-space:pre;line-height:normal;transform:scaleX(1.0355);transform-origin:0 0;-webkit-text-stroke:0.12px #1f1f1f;">Eliana Moreno Guevara - 2019</div>
<div style="position:absolute;left:156.88px;top:588.78px;font-family:'Liberation Sans',sans-serif;font-size:13.5px;font-weight:normal;color:#1f1f1f;white-space:pre;line-height:normal;transform:scaleX(1.0600);transform-origin:0 0;-webkit-text-stroke:0.12px #1f1f1f;">6</div>
<div style="position:absolute;left:170.70px;top:588.78px;font-family:'Liberation Sans',sans-serif;font-size:13.5px;font-weight:normal;color:#1f1f1f;white-space:pre;line-height:normal;transform:scaleX(1.0446);transform-origin:0 0;-webkit-text-stroke:0.12px #1f1f1f;">Josefina Cabezas Valverde</div>
<div style="position:absolute;left:771.68px;top:588.78px;font-family:'Liberation Sans',sans-serif;font-size:13.5px;font-weight:normal;color:#1f1f1f;white-space:pre;line-height:normal;transform:scaleX(1.0600);transform-origin:0 0;-webkit-text-stroke:0.12px #1f1f1f;">3</div>
<div style="position:absolute;left:1023.68px;top:588.78px;font-family:'Liberation Sans',sans-serif;font-size:13.5px;font-weight:normal;color:#1f1f1f;white-space:pre;line-height:normal;transform:scaleX(1.0600);transform-origin:0 0;-webkit-text-stroke:0.12px #1f1f1f;">1</div>
<div style="position:absolute;left:1209.06px;top:588.78px;font-family:'Liberation Sans',sans-serif;font-size:13.5px;font-weight:normal;color:#1f1f1f;white-space:pre;line-height:normal;transform:scaleX(1.0355);transform-origin:0 0;-webkit-text-stroke:0.12px #1f1f1f;">Eliana Moreno Guevara - 2019</div>
<div style="position:absolute;left:156.88px;top:609.88px;font-family:'Liberation Sans',sans-serif;font-size:13.5px;font-weight:normal;color:#1f1f1f;white-space:pre;line-height:normal;transform:scaleX(1.0600);transform-origin:0 0;-webkit-text-stroke:0.12px #1f1f1f;">7</div>
<div style="position:absolute;left:170.70px;top:609.88px;font-family:'Liberation Sans',sans-serif;font-size:13.5px;font-weight:normal;color:#1f1f1f;white-space:pre;line-height:normal;transform:scaleX(1.0582);transform-origin:0 0;-webkit-text-stroke:0.12px #1f1f1f;">Agustin Contreras</div>
<div style="position:absolute;left:771.68px;top:609.88px;font-family:'Liberation Sans',sans-serif;font-size:13.5px;font-weight:normal;color:#1f1f1f;white-space:pre;line-height:normal;transform:scaleX(1.0600);transform-origin:0 0;-webkit-text-stroke:0.12px #1f1f1f;">3</div>
<div style="position:absolute;left:1023.68px;top:609.88px;font-family:'Liberation Sans',sans-serif;font-size:13.5px;font-weight:normal;color:#1f1f1f;white-space:pre;line-height:normal;transform:scaleX(1.0600);transform-origin:0 0;-webkit-text-stroke:0.12px #1f1f1f;">2</div>
<div style="position:absolute;left:1209.06px;top:609.88px;font-family:'Liberation Sans',sans-serif;font-size:13.5px;font-weight:normal;color:#1f1f1f;white-space:pre;line-height:normal;transform:scaleX(1.0355);transform-origin:0 0;-webkit-text-stroke:0.12px #1f1f1f;">Eliana Moreno Guevara - 2019</div>
<div style="position:absolute;left:156.88px;top:630.98px;font-family:'Liberation Sans',sans-serif;font-size:13.5px;font-weight:normal;color:#1f1f1f;white-space:pre;line-height:normal;transform:scaleX(1.0600);transform-origin:0 0;-webkit-text-stroke:0.12px #1f1f1f;">8</div>
<div style="position:absolute;left:169.69px;top:630.98px;font-family:'Liberation Sans',sans-serif;font-size:13.5px;font-weight:normal;color:#1f1f1f;white-space:pre;line-height:normal;transform:scaleX(1.0098);transform-origin:0 0;-webkit-text-stroke:0.12px #1f1f1f;">Escodar Castro Silvia</div>
<div style="position:absolute;left:453.39px;top:630.98px;font-family:'Liberation Sans',sans-serif;font-size:13.5px;font-weight:normal;color:#1f1f1f;white-space:pre;line-height:normal;transform:scaleX(1.0703);transform-origin:0 0;-webkit-text-stroke:0.12px #1f1f1f;">Castro Monte Emilia</div>
<div style="position:absolute;left:1209.06px;top:630.98px;font-family:'Liberation Sans',sans-serif;font-size:13.5px;font-weight:normal;color:#1f1f1f;white-space:pre;line-height:normal;transform:scaleX(1.0355);transform-origin:0 0;-webkit-text-stroke:0.12px #1f1f1f;">Eliana Moreno Guevara - 2019</div>
<div style="position:absolute;left:156.88px;top:652.08px;font-family:'Liberation Sans',sans-serif;font-size:13.5px;font-weight:normal;color:#1f1f1f;white-space:pre;line-height:normal;transform:scaleX(1.0600);transform-origin:0 0;-webkit-text-stroke:0.12px #1f1f1f;">9</div>
<div style="position:absolute;left:169.66px;top:652.08px;font-family:'Liberation Sans',sans-serif;font-size:13.5px;font-weight:normal;color:#1f1f1f;white-space:pre;line-height:normal;transform:scaleX(1.0418);transform-origin:0 0;-webkit-text-stroke:0.12px #1f1f1f;">Benite Ruiz Jahira</div>
<div style="position:absolute;left:453.37px;top:652.08px;font-family:'Liberation Sans',sans-serif;font-size:13.5px;font-weight:normal;color:#1f1f1f;white-space:pre;line-height:normal;transform:scaleX(1.0317);transform-origin:0 0;-webkit-text-stroke:0.12px #1f1f1f;">Ruiz Arce Santa Epifania</div>
<div style="position:absolute;left:1209.06px;top:652.08px;font-family:'Liberation Sans',sans-serif;font-size:13.5px;font-weight:normal;color:#1f1f1f;white-space:pre;line-height:normal;transform:scaleX(1.0355);transform-origin:0 0;-webkit-text-stroke:0.12px #1f1f1f;">Eliana Moreno Guevara - 2019</div>
<div style="position:absolute;left:148.92px;top:673.18px;font-family:'Liberation Sans',sans-serif;font-size:13.5px;font-weight:normal;color:#1f1f1f;white-space:pre;line-height:normal;transform:scaleX(1.0600);transform-origin:0 0;-webkit-text-stroke:0.12px #1f1f1f;">10</div>
<div style="position:absolute;left:169.69px;top:673.18px;font-family:'Liberation Sans',sans-serif;font-size:13.5px;font-weight:normal;color:#1f1f1f;white-space:pre;line-height:normal;transform:scaleX(1.0534);transform-origin:0 0;-webkit-text-stroke:0.12px #1f1f1f;">Campuzano Moran Frebby</div>
<div style="position:absolute;left:453.39px;top:673.18px;font-family:'Liberation Sans',sans-serif;font-size:13.5px;font-weight:normal;color:#1f1f1f;white-space:pre;line-height:normal;transform:scaleX(1.0792);transform-origin:0 0;-webkit-text-stroke:0.12px #1f1f1f;">Campuzano Maridueña Alejandro</div>
<div style="position:absolute;left:1209.06px;top:673.18px;font-family:'Liberation Sans',sans-serif;font-size:13.5px;font-weight:normal;color:#1f1f1f;white-space:pre;line-height:normal;transform:scaleX(1.0355);transform-origin:0 0;-webkit-text-stroke:0.12px #1f1f1f;">Eliana Moreno Guevara - 2019</div>
<div style="position:absolute;left:149.98px;top:694.28px;font-family:'Liberation Sans',sans-serif;font-size:13.5px;font-weight:normal;color:#1f1f1f;white-space:pre;line-height:normal;transform:scaleX(1.0600);transform-origin:0 0;-webkit-text-stroke:0.12px #1f1f1f;">11</div>
<div style="position:absolute;left:169.69px;top:694.28px;font-family:'Liberation Sans',sans-serif;font-size:13.5px;font-weight:normal;color:#1f1f1f;white-space:pre;line-height:normal;transform:scaleX(1.0783);transform-origin:0 0;-webkit-text-stroke:0.12px #1f1f1f;">Campuzano Maridueña Alejandro</div>
<div style="position:absolute;left:771.68px;top:694.28px;font-family:'Liberation Sans',sans-serif;font-size:13.5px;font-weight:normal;color:#1f1f1f;white-space:pre;line-height:normal;transform:scaleX(1.0600);transform-origin:0 0;-webkit-text-stroke:0.12px #1f1f1f;">1</div>
<div style="position:absolute;left:1023.68px;top:694.28px;font-family:'Liberation Sans',sans-serif;font-size:13.5px;font-weight:normal;color:#1f1f1f;white-space:pre;line-height:normal;transform:scaleX(1.0600);transform-origin:0 0;-webkit-text-stroke:0.12px #1f1f1f;">1</div>
<div style="position:absolute;left:1209.06px;top:694.28px;font-family:'Liberation Sans',sans-serif;font-size:13.5px;font-weight:normal;color:#1f1f1f;white-space:pre;line-height:normal;transform:scaleX(1.0355);transform-origin:0 0;-webkit-text-stroke:0.12px #1f1f1f;">Eliana Moreno Guevara - 2019</div>
<div style="position:absolute;left:148.92px;top:715.38px;font-family:'Liberation Sans',sans-serif;font-size:13.5px;font-weight:normal;color:#1f1f1f;white-space:pre;line-height:normal;transform:scaleX(1.0600);transform-origin:0 0;-webkit-text-stroke:0.12px #1f1f1f;">12</div>
<div style="position:absolute;left:169.65px;top:715.38px;font-family:'Liberation Sans',sans-serif;font-size:13.5px;font-weight:normal;color:#1f1f1f;white-space:pre;line-height:normal;transform:scaleX(1.0469);transform-origin:0 0;-webkit-text-stroke:0.12px #1f1f1f;">Lopez Pico Elio Amador</div>
<div style="position:absolute;left:453.35px;top:715.38px;font-family:'Liberation Sans',sans-serif;font-size:13.5px;font-weight:normal;color:#1f1f1f;white-space:pre;line-height:normal;transform:scaleX(1.0464);transform-origin:0 0;-webkit-text-stroke:0.12px #1f1f1f;">Lopez Chichande Elio Ezequiel</div>
<div style="position:absolute;left:1209.06px;top:715.38px;font-family:'Liberation Sans',sans-serif;font-size:13.5px;font-weight:normal;color:#1f1f1f;white-space:pre;line-height:normal;transform:scaleX(1.0355);transform-origin:0 0;-webkit-text-stroke:0.12px #1f1f1f;">Eliana Moreno Guevara - 2019</div>
<div style="position:absolute;left:148.92px;top:736.48px;font-family:'Liberation Sans',sans-serif;font-size:13.5px;font-weight:normal;color:#1f1f1f;white-space:pre;line-height:normal;transform:scaleX(1.0600);transform-origin:0 0;-webkit-text-stroke:0.12px #1f1f1f;">13</div>
<div style="position:absolute;left:170.70px;top:736.48px;font-family:'Liberation Sans',sans-serif;font-size:13.5px;font-weight:normal;color:#1f1f1f;white-space:pre;line-height:normal;transform:scaleX(1.0467);transform-origin:0 0;-webkit-text-stroke:0.12px #1f1f1f;">Jose Manuel Alvarez Yepez</div>
<div style="position:absolute;left:453.36px;top:736.48px;font-family:'Liberation Sans',sans-serif;font-size:13.5px;font-weight:normal;color:#1f1f1f;white-space:pre;line-height:normal;transform:scaleX(1.0437);transform-origin:0 0;-webkit-text-stroke:0.12px #1f1f1f;">Luis Victoria Rios Zapato</div>
<div style="position:absolute;left:1209.06px;top:736.48px;font-family:'Liberation Sans',sans-serif;font-size:13.5px;font-weight:normal;color:#1f1f1f;white-space:pre;line-height:normal;transform:scaleX(1.0355);transform-origin:0 0;-webkit-text-stroke:0.12px #1f1f1f;">Eliana Moreno Guevara - 2019</div>
<div style="position:absolute;left:148.86px;top:757.58px;font-family:'Liberation Sans',sans-serif;font-size:13.5px;font-weight:normal;color:#1f1f1f;white-space:pre;line-height:normal;transform:scaleX(1.0600);transform-origin:0 0;-webkit-text-stroke:0.12px #1f1f1f;">14</div>
<div style="position:absolute;left:170.70px;top:757.58px;font-family:'Liberation Sans',sans-serif;font-size:13.5px;font-weight:normal;color:#1f1f1f;white-space:pre;line-height:normal;transform:scaleX(1.0146);transform-origin:0 0;-webkit-text-stroke:0.12px #1f1f1f;">Jose Escodar Moran</div>
<div style="position:absolute;left:771.68px;top:757.58px;font-family:'Liberation Sans',sans-serif;font-size:13.5px;font-weight:normal;color:#1f1f1f;white-space:pre;line-height:normal;transform:scaleX(1.0600);transform-origin:0 0;-webkit-text-stroke:0.12px #1f1f1f;">1</div>
<div style="position:absolute;left:1023.68px;top:757.58px;font-family:'Liberation Sans',sans-serif;font-size:13.5px;font-weight:normal;color:#1f1f1f;white-space:pre;line-height:normal;transform:scaleX(1.0600);transform-origin:0 0;-webkit-text-stroke:0.12px #1f1f1f;">3</div>
<div style="position:absolute;left:1209.06px;top:757.58px;font-family:'Liberation Sans',sans-serif;font-size:13.5px;font-weight:normal;color:#1f1f1f;white-space:pre;line-height:normal;transform:scaleX(1.0355);transform-origin:0 0;-webkit-text-stroke:0.12px #1f1f1f;">Eliana Moreno Guevara - 2019</div>
<div style="position:absolute;left:148.92px;top:778.68px;font-family:'Liberation Sans',sans-serif;font-size:13.5px;font-weight:normal;color:#1f1f1f;white-space:pre;line-height:normal;transform:scaleX(1.0600);transform-origin:0 0;-webkit-text-stroke:0.12px #1f1f1f;">15</div>
<div style="position:absolute;left:169.69px;top:778.68px;font-family:'Liberation Sans',sans-serif;font-size:13.5px;font-weight:normal;color:#1f1f1f;white-space:pre;line-height:normal;transform:scaleX(1.0092);transform-origin:0 0;-webkit-text-stroke:0.12px #1f1f1f;">Rios Palma Jessenia</div>
<div style="position:absolute;left:453.34px;top:778.68px;font-family:'Liberation Sans',sans-serif;font-size:13.5px;font-weight:normal;color:#1f1f1f;white-space:pre;line-height:normal;transform:scaleX(1.0650);transform-origin:0 0;-webkit-text-stroke:0.12px #1f1f1f;">Palma Villareal Sonia Maria</div>
<div style="position:absolute;left:1209.06px;top:778.68px;font-family:'Liberation Sans',sans-serif;font-size:13.5px;font-weight:normal;color:#1f1f1f;white-space:pre;line-height:normal;transform:scaleX(1.0355);transform-origin:0 0;-webkit-text-stroke:0.12px #1f1f1f;">Eliana Moreno Guevara - 2019</div>
<div style="position:absolute;left:148.92px;top:799.78px;font-family:'Liberation Sans',sans-serif;font-size:13.5px;font-weight:normal;color:#1f1f1f;white-space:pre;line-height:normal;transform:scaleX(1.0600);transform-origin:0 0;-webkit-text-stroke:0.12px #1f1f1f;">16</div>
<div style="position:absolute;left:169.67px;top:799.78px;font-family:'Liberation Sans',sans-serif;font-size:13.5px;font-weight:normal;color:#1f1f1f;white-space:pre;line-height:normal;transform:scaleX(1.0304);transform-origin:0 0;-webkit-text-stroke:0.12px #1f1f1f;">Macias Garaicoa Pebro</div>
<div style="position:absolute;left:453.39px;top:799.78px;font-family:'Liberation Sans',sans-serif;font-size:13.5px;font-weight:normal;color:#1f1f1f;white-space:pre;line-height:normal;transform:scaleX(1.0440);transform-origin:0 0;-webkit-text-stroke:0.12px #1f1f1f;">Garaicoa Valdiviezo Bacilia de Jesus</div>
<div style="position:absolute;left:1209.06px;top:799.78px;font-family:'Liberation Sans',sans-serif;font-size:13.5px;font-weight:normal;color:#1f1f1f;white-space:pre;line-height:normal;transform:scaleX(1.0355);transform-origin:0 0;-webkit-text-stroke:0.12px #1f1f1f;">Eliana Moreno Guevara - 2019</div>
<div style="position:absolute;left:148.92px;top:820.88px;font-family:'Liberation Sans',sans-serif;font-size:13.5px;font-weight:normal;color:#1f1f1f;white-space:pre;line-height:normal;transform:scaleX(1.0600);transform-origin:0 0;-webkit-text-stroke:0.12px #1f1f1f;">17</div>
<div style="position:absolute;left:170.70px;top:820.88px;font-family:'Liberation Sans',sans-serif;font-size:13.5px;font-weight:normal;color:#1f1f1f;white-space:pre;line-height:normal;transform:scaleX(1.0523);transform-origin:0 0;-webkit-text-stroke:0.12px #1f1f1f;">Villao Solis Cecilia Teresa</div>
<div style="position:absolute;left:453.38px;top:820.88px;font-family:'Liberation Sans',sans-serif;font-size:13.5px;font-weight:normal;color:#1f1f1f;white-space:pre;line-height:normal;transform:scaleX(1.0260);transform-origin:0 0;-webkit-text-stroke:0.12px #1f1f1f;">Bajaña Pluas Jose Ceferico</div>
<div style="position:absolute;left:1209.06px;top:820.88px;font-family:'Liberation Sans',sans-serif;font-size:13.5px;font-weight:normal;color:#1f1f1f;white-space:pre;line-height:normal;transform:scaleX(1.0355);transform-origin:0 0;-webkit-text-stroke:0.12px #1f1f1f;">Eliana Moreno Guevara - 2019</div>
<div style="position:absolute;left:148.92px;top:851.18px;font-family:'Liberation Sans',sans-serif;font-size:13.5px;font-weight:normal;color:#1f1f1f;white-space:pre;line-height:normal;transform:scaleX(1.0600);transform-origin:0 0;-webkit-text-stroke:0.12px #1f1f1f;">18</div>
<div style="position:absolute;left:170.70px;top:851.18px;font-family:'Liberation Sans',sans-serif;font-size:13.5px;font-weight:normal;color:#1f1f1f;white-space:pre;line-height:normal;transform:scaleX(1.0426);transform-origin:0 0;-webkit-text-stroke:0.12px #1f1f1f;">Torres Castro Ines Maria</div>
<div style="position:absolute;left:1209.06px;top:851.38px;font-family:'Liberation Sans',sans-serif;font-size:13.5px;font-weight:normal;color:#1f1f1f;white-space:pre;line-height:normal;transform:scaleX(1.0355);transform-origin:0 0;-webkit-text-stroke:0.12px #1f1f1f;">Eliana Moreno Guevara - 2019</div>
<div style="position:absolute;left:58px;top:395px;width:1434px;height:494.5px;overflow:hidden"><div style="position:absolute;left:-58px;top:-395px"><div style="position:absolute;left:148.92px;top:882.78px;font-family:'Liberation Sans',sans-serif;font-size:13.5px;font-weight:normal;color:#1f1f1f;white-space:pre;line-height:normal;transform:scaleX(1.0600);transform-origin:0 0;-webkit-text-stroke:0.12px #1f1f1f;">19</div></div></div>
<div style="position:absolute;left:58px;top:395px;width:1434px;height:494.5px;overflow:hidden"><div style="position:absolute;left:-58px;top:-395px"><div style="position:absolute;left:169.70px;top:882.78px;font-family:'Liberation Sans',sans-serif;font-size:13.5px;font-weight:normal;color:#1f1f1f;white-space:pre;line-height:normal;transform:scaleX(1.0719);transform-origin:0 0;-webkit-text-stroke:0.12px #1f1f1f;">Castellare Ovalo Victor Guillermo</div></div></div>
<div style="position:absolute;left:58px;top:395px;width:1434px;height:494.5px;overflow:hidden"><div style="position:absolute;left:-58px;top:-395px"><div style="position:absolute;left:453.33px;top:882.78px;font-family:'Liberation Sans',sans-serif;font-size:13.5px;font-weight:normal;color:#1f1f1f;white-space:pre;line-height:normal;transform:scaleX(1.0758);transform-origin:0 0;-webkit-text-stroke:0.12px #1f1f1f;">Moran Maldonado Juana Matilde</div></div></div>
<div style="position:absolute;left:58px;top:395px;width:1434px;height:494.5px;overflow:hidden"><div style="position:absolute;left:-58px;top:-395px"><div style="position:absolute;left:1209.06px;top:882.78px;font-family:'Liberation Sans',sans-serif;font-size:13.5px;font-weight:normal;color:#1f1f1f;white-space:pre;line-height:normal;transform:scaleX(1.0355);transform-origin:0 0;-webkit-text-stroke:0.12px #1f1f1f;">Eliana Moreno Guevara - 2019</div></div></div>
<div style="position:absolute;left:169.69px;top:505.08px;font-family:'Liberation Sans',sans-serif;font-size:13.5px;font-weight:normal;color:#666666;white-space:pre;line-height:normal;transform:scaleX(1.1403);transform-origin:0 0;">Carmen Zavala Quijije</div>
<div style="position:absolute;left:460.70px;top:840.88px;font-family:'Liberation Sans',sans-serif;font-size:13.5px;font-weight:normal;color:#1f1f1f;white-space:pre;line-height:normal;transform:scaleX(1.0503);transform-origin:0 0;-webkit-text-stroke:0.12px #1f1f1f;">Torres Cerrasco Segundo Alciviades</div>
<div style="position:absolute;left:477.90px;top:861.28px;font-family:'Liberation Sans',sans-serif;font-size:13.5px;font-weight:normal;color:#1f1f1f;white-space:pre;line-height:normal;transform:scaleX(1.0700);transform-origin:0 0;-webkit-text-stroke:0.12px #1f1f1f;">Castro Montes Catula Antonia</div>
<div style="position:absolute;left:149.04px;top:955.67px;font-family:'Liberation Sans',sans-serif;font-size:15.5px;font-weight:normal;color:#333333;white-space:pre;line-height:normal;transform:scaleX(0.9622);transform-origin:0 0;">Buscar</div>
<div style="position:absolute;left:1089.90px;top:955.33px;font-family:'Liberation Sans',sans-serif;font-size:14px;font-weight:normal;color:#ffffff;white-space:pre;line-height:normal;transform:scaleX(0.9979);transform-origin:0 0;">33°C</div>
<div style="position:absolute;left:1129.90px;top:955.33px;font-family:'Liberation Sans',sans-serif;font-size:14px;font-weight:normal;color:#ffffff;white-space:pre;line-height:normal;transform:scaleX(1.0033);transform-origin:0 0;">Parc. soleado</div>
<div style="position:absolute;left:1383.87px;top:946.44px;font-family:'Liberation Sans',sans-serif;font-size:12px;font-weight:normal;color:#ffffff;white-space:pre;line-height:normal;transform:scaleX(0.9237);transform-origin:0 0;">14:24</div>
<div style="position:absolute;left:1366.97px;top:964.94px;font-family:'Liberation Sans',sans-serif;font-size:12px;font-weight:normal;color:#ffffff;white-space:pre;line-height:normal;transform:scaleX(1.0342);transform-origin:0 0;">23/10/2023</div>
</body></html>
